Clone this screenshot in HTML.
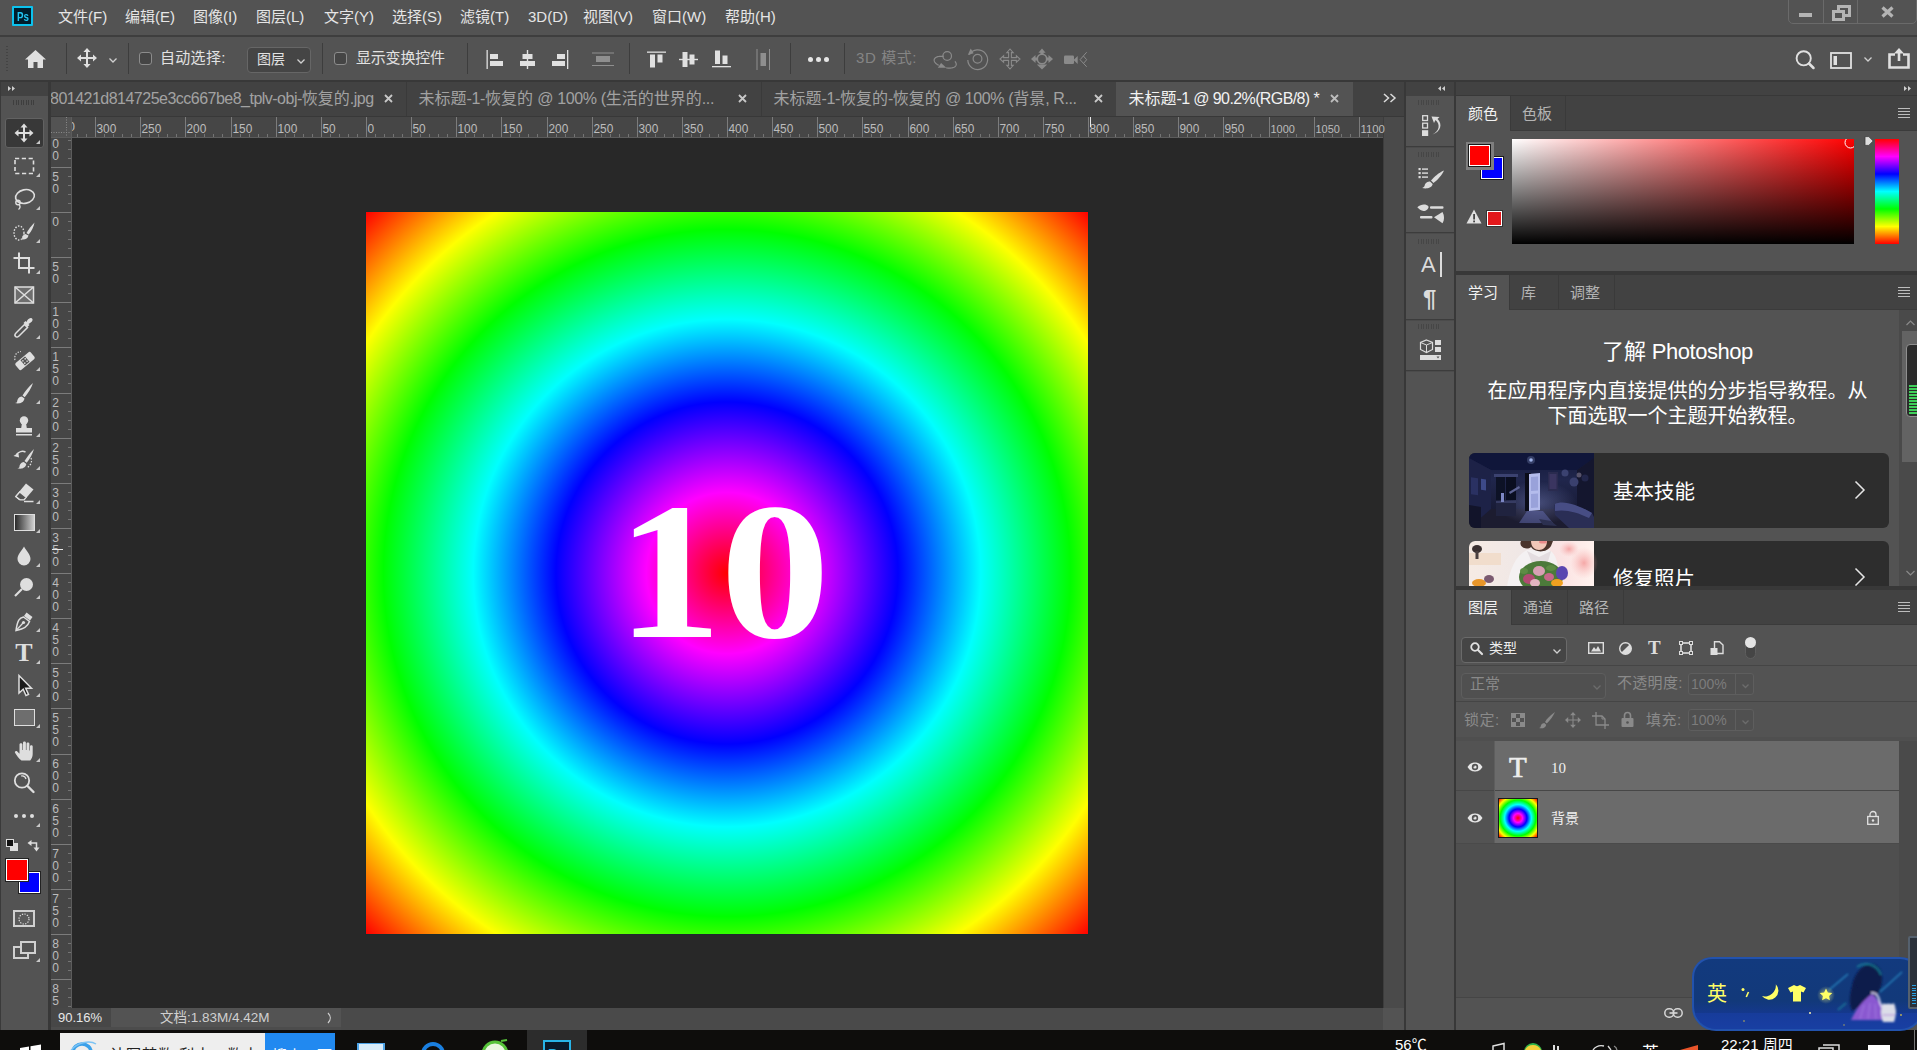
<!DOCTYPE html><html lang="zh-CN"><head><meta charset="utf-8"><title>Photoshop</title><style>
*{margin:0;padding:0;box-sizing:border-box}
html,body{width:1917px;height:1050px;overflow:hidden;background:#535353}
body{position:relative;font-family:"Liberation Sans","Noto Sans CJK SC",sans-serif;font-size:15px;color:#dcdcdc;line-height:1}
.a{position:absolute}
.t{position:absolute;white-space:nowrap;line-height:20px;height:20px}
svg{position:absolute;overflow:visible}
.sep{position:absolute;width:1px;background:#3d3d3d}
.cj{font-family:"Liberation Sans","Noto Sans CJK SC",sans-serif}
</style></head><body>
<div class="a" style="left:0px;top:0px;width:1917px;height:35px;background:#535353;"></div>
<div class="a" style="left:0px;top:35px;width:1917px;height:2px;background:#3e3e3e;"></div>
<div class="a" style="left:12px;top:6px;width:21px;height:20px;background:#001d2c;border:2px solid #0cc2ee;border-radius:1px"></div>
<div class="t" style="left:15px;top:6px;font-size:12.500px;font-weight:bold;color:#22c4f2;letter-spacing:0;left:16.500px;top:6.500px;transform-origin:0 0;transform:scaleX(0.780)">Ps</div>
<div class="t" style="left:58px;top:6.5px;font-size:15px;color:#e6e6e6;">文件(F)</div>
<div class="t" style="left:125px;top:6.5px;font-size:15px;color:#e6e6e6;">编辑(E)</div>
<div class="t" style="left:193px;top:6.5px;font-size:15px;color:#e6e6e6;">图像(I)</div>
<div class="t" style="left:256px;top:6.5px;font-size:15px;color:#e6e6e6;">图层(L)</div>
<div class="t" style="left:324px;top:6.5px;font-size:15px;color:#e6e6e6;">文字(Y)</div>
<div class="t" style="left:392px;top:6.5px;font-size:15px;color:#e6e6e6;">选择(S)</div>
<div class="t" style="left:460px;top:6.5px;font-size:15px;color:#e6e6e6;">滤镜(T)</div>
<div class="t" style="left:528px;top:6.5px;font-size:15px;color:#e6e6e6;">3D(D)</div>
<div class="t" style="left:583px;top:6.5px;font-size:15px;color:#e6e6e6;">视图(V)</div>
<div class="t" style="left:652px;top:6.5px;font-size:15px;color:#e6e6e6;">窗口(W)</div>
<div class="t" style="left:725px;top:6.5px;font-size:15px;color:#e6e6e6;">帮助(H)</div>
<div class="a" style="left:1788px;top:-2px;width:129px;height:26px;border:1px solid #6a6a6a;border-radius:0 0 5px 5px"></div>
<div class="a" style="left:1823px;top:0px;width:1px;height:23px;background:#6a6a6a;"></div>
<div class="a" style="left:1857px;top:0px;width:1px;height:23px;background:#6a6a6a;"></div>
<div class="a" style="left:1799px;top:13px;width:13px;height:4px;background:#b4b4b4;"></div>
<svg style="left:1832px;top:5px" width="19" height="16" viewBox="0 0 19 16"><path d="M6.5 1.5h11v9h-11z" fill="none" stroke="#b4b4b4" stroke-width="3"/><path d="M1.5 6.5h10v8h-10z" fill="#535353" stroke="#b4b4b4" stroke-width="3"/></svg>
<svg style="left:1881px;top:7px" width="13" height="10" viewBox="0 0 13 10"><path d="M1.5 0.5L11.5 9.5M11.5 0.5L1.5 9.5" stroke="#b4b4b4" stroke-width="3.2"/></svg>
<div class="a" style="left:0px;top:37px;width:1917px;height:43px;background:#535353;"></div>
<div class="a" style="left:0px;top:80px;width:1917px;height:2px;background:#383838;"></div>
<div class="a" style="left:6px;top:46px;width:2px;height:1px;background:#444;"></div>
<div class="a" style="left:6px;top:49px;width:2px;height:1px;background:#444;"></div>
<div class="a" style="left:6px;top:52px;width:2px;height:1px;background:#444;"></div>
<div class="a" style="left:6px;top:55px;width:2px;height:1px;background:#444;"></div>
<div class="a" style="left:6px;top:58px;width:2px;height:1px;background:#444;"></div>
<div class="a" style="left:6px;top:61px;width:2px;height:1px;background:#444;"></div>
<div class="a" style="left:6px;top:64px;width:2px;height:1px;background:#444;"></div>
<div class="a" style="left:6px;top:67px;width:2px;height:1px;background:#444;"></div>
<div class="a" style="left:6px;top:70px;width:2px;height:1px;background:#444;"></div>
<svg style="left:24px;top:49px" width="23" height="20" viewBox="0 0 23 20"><path d="M11.5 1L1 10.5h3V19h5.5v-6h4v6H19v-8.5h3z" fill="#e0e0e0"/></svg>
<div class="sep" style="left:66px;top:43px;height:31px"></div>
<div class="sep" style="left:128px;top:43px;height:31px"></div>
<div class="sep" style="left:322px;top:43px;height:31px"></div>
<div class="sep" style="left:467px;top:43px;height:31px"></div>
<div class="sep" style="left:629px;top:43px;height:31px"></div>
<div class="sep" style="left:790px;top:43px;height:31px"></div>
<div class="sep" style="left:844px;top:43px;height:31px"></div>
<svg style="left:77.0px;top:48.0px" width="20" height="20" viewBox="-10 -10 20 20"><path d="M0 -7V7M-7 0H7" stroke="#e0e0e0" stroke-width="2" fill="none"/><path d="M0 -10l3.6 4h-7.2zM0 10l3.6 -4h-7.2zM-10 0l4 -3.6v7.2zM10 0l-4 -3.6v7.2z" fill="#e0e0e0"/></svg>
<svg style="left:109.0px;top:58.0px" width="8" height="5.0" viewBox="0 0 8 5.0"><path d="M0.5 0.5L4.0 4.0L7.5 0.5" fill="none" stroke="#d0d0d0" stroke-width="1.3"/></svg>
<div class="a" style="left:139px;top:52px;width:13px;height:13px;border:1.5px solid #8c8c8c;border-radius:3px;background:#454545"></div>
<div class="t" style="left:160px;top:48px;font-size:15px;color:#e2e2e2;letter-spacing:0.3px">自动选择:</div>
<div class="a" style="left:247px;top:47px;width:64px;height:26px;border:1px solid #666;border-radius:4px;background:#454545"></div>
<div class="t" style="left:257px;top:49px;font-size:14px;color:#e2e2e2;">图层</div>
<svg style="left:297.0px;top:59.0px" width="8" height="5.0" viewBox="0 0 8 5.0"><path d="M0.5 0.5L4.0 4.0L7.5 0.5" fill="none" stroke="#d0d0d0" stroke-width="1.3"/></svg>
<div class="a" style="left:334px;top:52px;width:13px;height:13px;border:1.5px solid #8c8c8c;border-radius:3px;background:#454545"></div>
<div class="t" style="left:356px;top:48px;font-size:15px;color:#e2e2e2;letter-spacing:-0.200px">显示变换控件</div>
<svg style="left:486px;top:50px" width="18" height="19" viewBox="0 0 18 19"><rect x="0.5" y="0" width="1.3" height="19" fill="#e0e0e0"/><rect x="4" y="4" width="8" height="5" fill="#e0e0e0"/><rect x="4" y="11" width="13" height="5" fill="#e0e0e0"/></svg>
<svg style="left:520px;top:50px" width="15" height="19" viewBox="0 0 15 19"><rect x="6.8" y="0" width="1.4" height="19" fill="#e0e0e0"/><rect x="2.5" y="4" width="10" height="5" fill="#e0e0e0"/><rect x="0" y="11" width="15" height="5" fill="#e0e0e0"/></svg>
<svg style="left:551px;top:50px" width="18" height="19" viewBox="0 0 18 19"><rect x="16" y="0" width="1.3" height="19" fill="#e0e0e0"/><rect x="6" y="4" width="8" height="5" fill="#e0e0e0"/><rect x="1" y="11" width="13" height="5" fill="#e0e0e0"/></svg>
<svg style="left:592px;top:52px" width="22" height="15" viewBox="0 0 22 15"><rect x="0" y="0.5" width="22" height="1" fill="#8f8f8f"/><rect x="0" y="13" width="22" height="1" fill="#8f8f8f"/><rect x="4" y="4" width="14" height="6" fill="#8f8f8f"/></svg>
<svg style="left:647px;top:51px" width="20" height="17" viewBox="0 0 20 17"><rect x="0" y="0.5" width="19" height="1.3" fill="#e0e0e0"/><rect x="3" y="3.5" width="5" height="13" fill="#e0e0e0"/><rect x="10.5" y="3.5" width="5" height="8" fill="#e0e0e0"/></svg>
<svg style="left:679px;top:52px" width="19" height="15" viewBox="0 0 19 15"><rect x="0" y="6.8" width="19" height="1.4" fill="#e0e0e0"/><rect x="3.5" y="0" width="5" height="15" fill="#e0e0e0"/><rect x="10.5" y="2.5" width="5" height="10" fill="#e0e0e0"/></svg>
<svg style="left:712px;top:50px" width="19" height="18" viewBox="0 0 19 18"><rect x="0" y="16" width="19" height="1.3" fill="#e0e0e0"/><rect x="3" y="0.5" width="5" height="13.5" fill="#e0e0e0"/><rect x="10.5" y="5.5" width="5" height="8.5" fill="#e0e0e0"/></svg>
<svg style="left:756px;top:49px" width="15" height="21" viewBox="0 0 15 21"><rect x="0.5" y="0" width="1" height="21" fill="#8f8f8f"/><rect x="13" y="0" width="1" height="21" fill="#8f8f8f"/><rect x="4.5" y="4" width="5.5" height="13" fill="#8f8f8f"/></svg>
<div class="a" style="left:808px;top:57px;width:5px;height:5px;border-radius:50%;background:#e6e6e6"></div>
<div class="a" style="left:816px;top:57px;width:5px;height:5px;border-radius:50%;background:#e6e6e6"></div>
<div class="a" style="left:824px;top:57px;width:5px;height:5px;border-radius:50%;background:#e6e6e6"></div>
<div class="t" style="left:856px;top:48px;font-size:15px;color:#858585;letter-spacing:0.6px">3D 模式:</div>
<svg style="left:932px;top:48px" width="28" height="22" viewBox="0 0 28 22"><circle cx="15.200" cy="8" r="4.300" fill="none" stroke="#8a8a8a" stroke-width="1.200"/><path d="M11.62 8.43 L10.56 8.33 L9.52 8.29 L8.52 8.31 L7.56 8.38 L6.66 8.51 L5.82 8.69 L5.05 8.93 L4.36 9.21 L3.75 9.55 L3.24 9.93 L2.82 10.35 L2.50 10.81 L2.28 11.30 L2.17 11.81 L2.17 12.36 L2.27 12.92 L2.48 13.49 L2.79 14.07 L3.20 14.65 L3.71 15.22 L4.30 15.79 L4.99 16.34 L5.75 16.87 L6.59 17.37" fill="none" stroke="#8a8a8a" stroke-width="1.200"/><path d="M14.20 19.89 L15.10 20.00 L15.99 20.08 L16.86 20.11 L17.70 20.10 L18.51 20.05 L19.29 19.97 L20.02 19.84 L20.71 19.68 L21.35 19.47 L21.94 19.24 L22.46 18.97 L22.92 18.66 L23.32 18.33 L23.65 17.97 L23.91 17.58 L24.09 17.17 L24.20 16.75 L24.24 16.30 L24.21 15.84 L24.09 15.37 L23.91 14.89 L23.65 14.40 L23.33 13.92 L22.93 13.43" fill="none" stroke="#8a8a8a" stroke-width="1.200"/><path d="M5.800 19.800H14.300L9.100 15z" fill="#8a8a8a"/></svg>
<svg style="left:966px;top:47px" width="24" height="24" viewBox="0 0 24 24"><circle cx="11.500" cy="11.800" r="4.400" fill="none" stroke="#8a8a8a" stroke-width="1.200"/><path d="M3.200 7.600A9.900 9.900 0 1 1 1.800 13" fill="none" stroke="#8a8a8a" stroke-width="1.200"/><path d="M1.800 8L7.600 6.200L4.700 1.600z" fill="#8a8a8a"/></svg>
<svg style="left:999.300px;top:48.400px" width="22" height="22" viewBox="-11 -11 22 22"><path d="M0 -10L-3.200 -6.400H-1.400V-1.400H-6.400V-3.200L-10 0L-6.400 3.200V1.400H-1.400V6.400H-3.200L0 10L3.200 6.400H1.400V1.400H6.400V3.200L10 0L6.400 -3.200V-1.400H1.400V-6.400H3.200z" fill="none" stroke="#8a8a8a" stroke-width="1.100" stroke-linejoin="miter"/></svg>
<svg style="left:1030px;top:46.800px" width="24" height="24" viewBox="-12 -12 24 24"><circle r="4.700" fill="none" stroke="#8a8a8a" stroke-width="1.600"/><path d="M0 -10.500l3.600 4.200h-2v1.500h-3.200v-1.500h-2zM0 10.500l5.200 -5h-10.400zM-11 0l4.500 -4v2.400h1.500v3.200h-1.500v2.400zM11 0l-4.500 -4v2.400h-1.500v3.200h1.500v2.400z" fill="#8a8a8a"/></svg>
<svg style="left:1064px;top:51px" width="24" height="18" viewBox="0 0 24 18"><rect x="0" y="4.500" width="10" height="8.500" rx="1.200" fill="#8a8a8a"/><path d="M9.500 9l4.200-4v8z" fill="#8a8a8a"/><path d="M22.700 1.200L16.100 8.700L22.700 15.800" fill="none" stroke="#8a8a8a" stroke-width="1"/><path d="M19.400 5L22.700 8.700L19.400 12.500" fill="none" stroke="#8a8a8a" stroke-width="1"/></svg>
<svg style="left:1794px;top:48px" width="22" height="22" viewBox="0 0 22 22"><circle cx="9.700" cy="10.300" r="7.100" fill="none" stroke="#e0e0e0" stroke-width="1.900"/><path d="M15 15.500l4.500 4.500" stroke="#e0e0e0" stroke-width="2.500" stroke-linecap="round"/></svg>
<svg style="left:1830px;top:52px" width="22" height="17" viewBox="0 0 22 17"><rect x="1" y="1" width="20" height="15" fill="none" stroke="#e0e0e0" stroke-width="1.8"/><rect x="3.5" y="4" width="3.5" height="9" fill="#e0e0e0"/></svg>
<svg style="left:1864.0px;top:57.0px" width="8" height="5.0" viewBox="0 0 8 5.0"><path d="M0.5 0.5L4.0 4.0L7.5 0.5" fill="none" stroke="#d0d0d0" stroke-width="1.3"/></svg>
<svg style="left:1888px;top:48px" width="22" height="21" viewBox="0 0 22 21"><path d="M7 6.5H1.5V19.5H20.5V6.5H15" fill="none" stroke="#e0e0e0" stroke-width="2.6"/><path d="M11 13V3" stroke="#e0e0e0" stroke-width="2.6"/><path d="M11 0l5 5.5h-10z" fill="#e0e0e0"/></svg>
<div class="a" style="left:0px;top:82px;width:48px;height:948px;background:#535353;"></div>
<div class="a" style="left:0px;top:82px;width:48px;height:14px;background:#424242;"></div>
<div class="a" style="left:0px;top:82px;width:1px;height:948px;background:#3a3a3a;"></div>
<div class="a" style="left:48px;top:82px;width:3px;height:948px;background:#383838;"></div>
<svg style="left:8px;top:85.5px" width="8" height="5" viewBox="0 0 8 5"><path d="M0 0l3 2.500l-3 2.500zM4 0l3 2.500l-3 2.500z" fill="#cfcfcf"/></svg>
<div class="a" style="left:13.0px;top:100px;width:1px;height:5px;background:#3e3e3e;"></div>
<div class="a" style="left:15.5px;top:100px;width:1px;height:5px;background:#3e3e3e;"></div>
<div class="a" style="left:18.0px;top:100px;width:1px;height:5px;background:#3e3e3e;"></div>
<div class="a" style="left:20.5px;top:100px;width:1px;height:5px;background:#3e3e3e;"></div>
<div class="a" style="left:23.0px;top:100px;width:1px;height:5px;background:#3e3e3e;"></div>
<div class="a" style="left:25.5px;top:100px;width:1px;height:5px;background:#3e3e3e;"></div>
<div class="a" style="left:28.0px;top:100px;width:1px;height:5px;background:#3e3e3e;"></div>
<div class="a" style="left:30.5px;top:100px;width:1px;height:5px;background:#3e3e3e;"></div>
<div class="a" style="left:33.0px;top:100px;width:1px;height:5px;background:#3e3e3e;"></div>
<div class="a" style="left:4.500px;top:117.500px;width:39px;height:30px;background:#383838;border:1px solid #626262;border-radius:3px"></div>
<svg style="left:12px;top:121px" width="24" height="24" viewBox="0 0 24 24"><path d="M12 5V19M5 12H19" stroke="#dedede" stroke-width="2" fill="none"/><path d="M12 2.5l3.5 4h-7zM12 21.5l3.5 -4h-7zM2.5 12l4 -3.5v7zM21.5 12l-4 -3.5v7z" fill="#dedede"/></svg>
<svg style="left:36px;top:140px" width="4" height="4" viewBox="0 0 4 4"><path d="M4 0V4H0z" fill="#c8c8c8"/></svg>
<svg style="left:12px;top:153.5px" width="24" height="24" viewBox="0 0 24 24"><rect x="3" y="4.5" width="18.5" height="15" fill="none" stroke="#dedede" stroke-width="1.6" stroke-dasharray="4.2 2.6"/></svg>
<svg style="left:36px;top:172.5px" width="4" height="4" viewBox="0 0 4 4"><path d="M4 0V4H0z" fill="#c8c8c8"/></svg>
<svg style="left:12px;top:187px" width="24" height="24" viewBox="0 0 24 24"><ellipse cx="13" cy="9.5" rx="9.5" ry="6.8" fill="none" stroke="#dedede" stroke-width="1.6" transform="rotate(-12 13 9.5)"/><circle cx="6" cy="15.5" r="2.2" fill="none" stroke="#dedede" stroke-width="1.4"/><path d="M7 17.5c1.5 1.5 1.5 3.5 -0.5 5" fill="none" stroke="#dedede" stroke-width="1.4"/></svg>
<svg style="left:36px;top:206px" width="4" height="4" viewBox="0 0 4 4"><path d="M4 0V4H0z" fill="#c8c8c8"/></svg>
<svg style="left:12px;top:220px" width="24" height="24" viewBox="0 0 24 24"><ellipse cx="7" cy="13" rx="5" ry="7" fill="none" stroke="#dedede" stroke-width="1.4" stroke-dasharray="1.5 1.5"/><path d="M22.5 2.5c-3 3-6 7-8 10.5l2.2 1.6c3-3.5 5-8 5.8-12.100z" fill="#dedede"/><path d="M13.500 14c-2.500 0.500-3.500 2.500-3.500 5.500c3 0.500 6-1 6.500-4z" fill="#dedede"/></svg>
<svg style="left:36px;top:239px" width="4" height="4" viewBox="0 0 4 4"><path d="M4 0V4H0z" fill="#c8c8c8"/></svg>
<svg style="left:12px;top:251px" width="24" height="24" viewBox="0 0 24 24"><path d="M7 1.500V17H22.500M1.500 7H17V22.500" fill="none" stroke="#dedede" stroke-width="2"/></svg>
<svg style="left:36px;top:270px" width="4" height="4" viewBox="0 0 4 4"><path d="M4 0V4H0z" fill="#c8c8c8"/></svg>
<svg style="left:12px;top:283px" width="24" height="24" viewBox="0 0 24 24"><rect x="3" y="4" width="18.500" height="16" fill="#6e6e6e" stroke="#dedede" stroke-width="1.5"/><path d="M3 4L21.500 20M21.500 4L3 20" stroke="#dedede" stroke-width="1.5"/></svg>
<svg style="left:12px;top:316px" width="24" height="24" viewBox="0 0 24 24"><path d="M3.500 20.500c-1-1-0.500-2.500 0.500-3.500l8.500-8.500l3 3l-8.500 8.500c-1 1-2.500 1.500-3.500 0.500z" fill="none" stroke="#dedede" stroke-width="1.500"/><path d="M11.500 7l2-2l1 1c1-2 3-5 5.500-3.500c2 2-1.500 4.500-3.500 5.500l1 1l-2 2z" fill="#dedede"/></svg>
<svg style="left:36px;top:335px" width="4" height="4" viewBox="0 0 4 4"><path d="M4 0V4H0z" fill="#c8c8c8"/></svg>
<svg style="left:12px;top:348px" width="24" height="24" viewBox="0 0 24 24"><g transform="rotate(-40 13 13)"><rect x="3" y="8.500" width="20" height="9" rx="2" fill="#dedede"/><rect x="10" y="9.500" width="6" height="7" fill="#535353"/><g fill="#dedede"><circle cx="11.500" cy="11.500" r="0.800"/><circle cx="14.500" cy="11.500" r="0.800"/><circle cx="11.500" cy="14.500" r="0.800"/><circle cx="14.500" cy="14.500" r="0.800"/></g></g><path d="M3 12c-1-4 1-8 6-8.500" fill="none" stroke="#dedede" stroke-width="1.200" stroke-dasharray="1.400 1.400"/></svg>
<svg style="left:36px;top:367px" width="4" height="4" viewBox="0 0 4 4"><path d="M4 0V4H0z" fill="#c8c8c8"/></svg>
<svg style="left:12px;top:381px" width="24" height="24" viewBox="0 0 24 24"><path d="M21 2c-4 3.500-8 8.500-10.500 12.500l2.200 1.800c3.300-4 6.800-9.500 8.300-14.300z" fill="#dedede"/><path d="M9.800 15.500c-3 0.300-4.500 2.500-4.800 5.800c-0.500 0.500-1.500 0.700-2 0.700c3.500 1 8.500 0.500 9.500-4.500z" fill="#dedede"/></svg>
<svg style="left:36px;top:400px" width="4" height="4" viewBox="0 0 4 4"><path d="M4 0V4H0z" fill="#c8c8c8"/></svg>
<svg style="left:12px;top:414px" width="24" height="24" viewBox="0 0 24 24"><circle cx="12" cy="6.500" r="4.200" fill="#dedede"/><path d="M10 9h4l0.800 5H20v4.500H4V14h5.200z" fill="#dedede"/><rect x="4" y="20" width="16" height="1.500" fill="#dedede"/></svg>
<svg style="left:36px;top:433px" width="4" height="4" viewBox="0 0 4 4"><path d="M4 0V4H0z" fill="#c8c8c8"/></svg>
<svg style="left:12px;top:446.7px" width="24" height="24" viewBox="0 0 24 24"><path d="M22 2c-3.500 3.500-7 8-9.500 12l2.200 1.800c3-4 6-9 7.300-13.800z" fill="#dedede"/><path d="M11.800 15c-2.800 0.300-4.300 2.300-4.500 5.500c-0.500 0.500-1.300 0.700-2 0.700c3.500 1 8 0.500 9-4.200z" fill="#dedede"/><path d="M4.500 7.500c2-3 6-4 9-2.500" fill="none" stroke="#dedede" stroke-width="1.400"/><path d="M1.500 9l4.800-3.200l0.800 4.800z" fill="#dedede"/><path d="M19 11c1.500 4-0.500 8-4 9.500" fill="none" stroke="#dedede" stroke-width="1.200" stroke-dasharray="1.500 1.500"/></svg>
<svg style="left:36px;top:465.7px" width="4" height="4" viewBox="0 0 4 4"><path d="M4 0V4H0z" fill="#c8c8c8"/></svg>
<svg style="left:12px;top:481px" width="24" height="24" viewBox="0 0 24 24"><path d="M14 2.500l7.500 6l-9 10.500H7l-4-3.200z" fill="#dedede"/><path d="M4.500 15l6 4.800" stroke="#535353" stroke-width="0"/><path d="M3.800 15.500l4.200 3.300h4l2.200-2.600l-6.500-5.200z" fill="#535353" stroke="#dedede" stroke-width="1.300"/><path d="M12 20.500h9.500" stroke="#dedede" stroke-width="1.500"/></svg>
<svg style="left:36px;top:500px" width="4" height="4" viewBox="0 0 4 4"><path d="M4 0V4H0z" fill="#c8c8c8"/></svg>
<div class="a" style="left:14px;top:514px;width:20.500px;height:16.500px;border:1.500px solid #dedede;background:linear-gradient(90deg,#2a2a2a,#d0d0d0)"></div>
<svg style="left:36px;top:529px" width="4" height="4" viewBox="0 0 4 4"><path d="M4 0V4H0z" fill="#c8c8c8"/></svg>
<svg style="left:12px;top:543.7px" width="24" height="24" viewBox="0 0 24 24"><path d="M12 2.500c2.500 4.500 6.500 8 6.500 12.500a6.500 6.500 0 0 1-13 0c0-4.500 4-8 6.500-12.500z" fill="#dedede"/></svg>
<svg style="left:36px;top:562.7px" width="4" height="4" viewBox="0 0 4 4"><path d="M4 0V4H0z" fill="#c8c8c8"/></svg>
<svg style="left:12px;top:575.8px" width="24" height="24" viewBox="0 0 24 24"><circle cx="14.500" cy="8.500" r="6.500" fill="#dedede"/><path d="M10 13L3 20" stroke="#dedede" stroke-width="2.200"/></svg>
<svg style="left:36px;top:594.8px" width="4" height="4" viewBox="0 0 4 4"><path d="M4 0V4H0z" fill="#c8c8c8"/></svg>
<svg style="left:12px;top:609px" width="24" height="24" viewBox="0 0 24 24"><path d="M14.500 3.500l6 4.500l-2.500 3.500l-6-4.500z" fill="#dedede"/><path d="M11.500 8c-4 1-6 3-7.500 13.500c8-2 11.500-3.500 13.500-9z" fill="none" stroke="#dedede" stroke-width="1.500"/><path d="M4.500 21l6.500-7" stroke="#dedede" stroke-width="1.200"/><circle cx="11.500" cy="13.500" r="1.600" fill="#dedede"/></svg>
<svg style="left:36px;top:628px" width="4" height="4" viewBox="0 0 4 4"><path d="M4 0V4H0z" fill="#c8c8c8"/></svg>
<div class="t" style="left:13px;top:640px;width:22px;text-align:center;font-family:'Liberation Serif',serif;font-weight:bold;font-size:26px;line-height:26px;height:26px;color:#dedede">T</div>
<svg style="left:36px;top:660px" width="4" height="4" viewBox="0 0 4 4"><path d="M4 0V4H0z" fill="#c8c8c8"/></svg>
<svg style="left:12px;top:674px" width="24" height="24" viewBox="0 0 24 24"><path d="M7 1.500V19l4.200-3.800l2.800 6.300l2.500-1.100l-2.800-6.200h5.800z" fill="#1a1a1a" stroke="#dedede" stroke-width="1.500" stroke-linejoin="miter"/></svg>
<svg style="left:36px;top:693px" width="4" height="4" viewBox="0 0 4 4"><path d="M4 0V4H0z" fill="#c8c8c8"/></svg>
<div class="a" style="left:14px;top:709px;width:20.500px;height:16.500px;border:1.500px solid #dedede;background:#6e6e6e"></div>
<svg style="left:36px;top:724px" width="4" height="4" viewBox="0 0 4 4"><path d="M4 0V4H0z" fill="#c8c8c8"/></svg>
<svg style="left:12px;top:738.5px" width="24" height="24" viewBox="0 0 24 24"><path d="M9.500 21.500c-2.500-2-5-5-6.500-7.800c-0.700-1.400 1.200-2.500 2.300-1.300l2.200 2.400V5.500c0-1.800 2.900-1.800 2.900 0V11h0.600V3.800c0-1.800 2.900-1.800 2.900 0V11h0.600V4.800c0-1.800 2.900-1.800 2.900 0V11.500h0.600V7.500c0-1.700 2.700-1.700 2.700 0V15c0 3-1.200 5-2.500 6.500z" fill="#dedede"/></svg>
<svg style="left:36px;top:757.5px" width="4" height="4" viewBox="0 0 4 4"><path d="M4 0V4H0z" fill="#c8c8c8"/></svg>
<svg style="left:12px;top:771px" width="24" height="24" viewBox="0 0 24 24"><circle cx="10" cy="9.500" r="7.200" fill="none" stroke="#dedede" stroke-width="1.800"/><path d="M15.500 15l6 6" stroke="#dedede" stroke-width="2.400" stroke-linecap="round"/><path d="M9 5c2.500-0.500 4.500 1 5 3" fill="none" stroke="#dedede" stroke-width="1.200"/></svg>
<div class="a" style="left:14px;top:814px;width:4px;height:4px;border-radius:50%;background:#dedede"></div>
<div class="a" style="left:22px;top:814px;width:4px;height:4px;border-radius:50%;background:#dedede"></div>
<div class="a" style="left:30px;top:814px;width:4px;height:4px;border-radius:50%;background:#dedede"></div>
<svg style="left:36px;top:823px" width="4" height="4" viewBox="0 0 4 4"><path d="M4 0V4H0z" fill="#c8c8c8"/></svg>
<div class="a" style="left:10px;top:843px;width:8px;height:8px;background:#dcdcdc;"></div>
<div class="a" style="left:6px;top:839px;width:8px;height:8px;background:#111;border:1px solid #dcdcdc"></div>
<svg style="left:27px;top:839px" width="13" height="13" viewBox="0 0 13 13"><path d="M3.500 4H9.500V10" fill="none" stroke="#dedede" stroke-width="1.500"/><path d="M0.500 4l4-3v6zM9.500 12.500l-3-4h6z" fill="#dedede"/></svg>
<div class="a" style="left:18.700px;top:871.600px;width:21.300px;height:21.400px;background:#0000ff;border:1px solid #fff;outline:1px solid #222"></div>
<div class="a" style="left:6.300px;top:859px;width:21.300px;height:21.500px;background:#ff0000;border:1px solid #fff;outline:1px solid #222"></div>
<div class="a" style="left:13px;top:909.500px;width:22px;height:17px;border:2px solid #d0d0d0;background:#5a5a5a"></div>
<svg style="left:18px;top:912.5px" width="12" height="12" viewBox="0 0 12 12"><circle cx="6" cy="6" r="5" fill="none" stroke="#dedede" stroke-width="1.200" stroke-dasharray="1.300 1.300"/></svg>
<div class="a" style="left:13px;top:946px;width:16px;height:13px;border:2px solid #d0d0d0;background:#535353"></div>
<div class="a" style="left:20px;top:941px;width:16px;height:13px;border:2px solid #d0d0d0;background:#535353"></div>
<svg style="left:36px;top:958px" width="4" height="4" viewBox="0 0 4 4"><path d="M4 0V4H0z" fill="#c8c8c8"/></svg>
<div class="a" style="left:51px;top:82px;width:1353px;height:34px;background:#424242;"></div>
<div class="a" style="left:51px;top:116px;width:1353px;height:1px;background:#383838;"></div>
<div class="t" style="left:50px;top:88.5px;font-size:16px;color:#a2a2a2;"><span style="letter-spacing:-0.513px">801421d814725e3cc667be8_tplv-obj-</span>恢复的<span style="letter-spacing:-0.513px">.jpg</span></div>
<div class="a" style="left:48px;top:82px;width:3px;height:34px;background:#383838;"></div>
<svg style="left:384px;top:94px" width="9" height="9" viewBox="0 0 9 9"><path d="M1 1L8 8M8 1L1 8" stroke="#c8c8c8" stroke-width="1.8"/></svg>
<div class="a" style="left:406px;top:82px;width:1px;height:34px;background:#3a3a3a;"></div>
<div class="a" style="left:761px;top:82px;width:1px;height:34px;background:#3a3a3a;"></div>
<div class="t" style="left:418.5px;top:88.5px;font-size:16px;color:#a2a2a2;">未标题<span style="letter-spacing:-0.349px">-1-</span>恢复的<span style="letter-spacing:-0.349px"> @ 100% (</span>生活的世界的<span style="letter-spacing:-0.349px">...</span></div>
<svg style="left:738px;top:94px" width="9" height="9" viewBox="0 0 9 9"><path d="M1 1L8 8M8 1L1 8" stroke="#c8c8c8" stroke-width="1.8"/></svg>
<div class="t" style="left:773.5px;top:88.5px;font-size:16px;color:#a2a2a2;">未标题<span style="letter-spacing:-0.395px">-1-</span>恢复的<span style="letter-spacing:-0.395px">-</span>恢复的<span style="letter-spacing:-0.395px"> @ 100% (</span>背景<span style="letter-spacing:-0.395px">, R...</span></div>
<svg style="left:1094px;top:94px" width="9" height="9" viewBox="0 0 9 9"><path d="M1 1L8 8M8 1L1 8" stroke="#c8c8c8" stroke-width="1.8"/></svg>
<div class="a" style="left:1116px;top:82px;width:237px;height:34px;background:#535353;"></div>
<div class="t" style="left:1128.5px;top:88.5px;font-size:16px;color:#f2f2f2;">未标题<span style="letter-spacing:-0.609px">-1 @ 90.2%(RGB/8) *</span></div>
<svg style="left:1330px;top:94px" width="9" height="9" viewBox="0 0 9 9"><path d="M1 1L8 8M8 1L1 8" stroke="#bdbdbd" stroke-width="1.8"/></svg>
<svg style="left:1383px;top:93px" width="13" height="10" viewBox="0 0 13 10"><path d="M1 1l4.500 4l-4.500 4M7.500 1l4.500 4l-4.500 4" fill="none" stroke="#dcdcdc" stroke-width="1.500"/></svg>
<div class="a" style="left:51px;top:117px;width:1353px;height:891px;background:#282828;"></div>
<div class="a" style="left:51px;top:117px;width:1332px;height:21px;background:#464646;"></div>
<div class="a" style="left:51px;top:117px;width:21px;height:891px;background:#464646;"></div>
<div class="a" style="left:51px;top:137px;width:1332px;height:1px;background:#5c5c5c;"></div>
<div class="a" style="left:71px;top:117px;width:1px;height:891px;background:#5c5c5c;"></div>
<div class="a" style="left:51px;top:117px;width:20px;height:20px;background:#535353;"></div>
<svg style="left:51px;top:117px" width="20" height="20" viewBox="0 0 20 20"><path d="M15.500 0V20M0 15.500H20" stroke="#8a8a8a" stroke-width="1" stroke-dasharray="1 1.500"/></svg>
<div class="a" style="left:1383px;top:117px;width:21px;height:891px;background:#4a4a4a;"></div>
<div class="a" style="left:1383px;top:117px;width:1px;height:891px;background:#3d3d3d;"></div>
<svg style="left:72px;top:117px" width="1311" height="21" viewBox="72 117 1311 21"><rect x="77" y="134" width="1" height="3" fill="#747474"/><rect x="86" y="134" width="1" height="3" fill="#747474"/><rect x="95" y="117" width="1" height="20" fill="#7c7c7c"/><text x="96.5" y="133" font-size="12.5" fill="#bcbcbc" font-family="Liberation Sans, sans-serif" textLength="19.799999999999997" lengthAdjust="spacingAndGlyphs">300</text><rect x="104" y="134" width="1" height="3" fill="#747474"/><rect x="113" y="134" width="1" height="3" fill="#747474"/><rect x="122" y="134" width="1" height="3" fill="#747474"/><rect x="131" y="134" width="1" height="3" fill="#747474"/><rect x="140" y="117" width="1" height="20" fill="#7c7c7c"/><text x="141.5" y="133" font-size="12.5" fill="#bcbcbc" font-family="Liberation Sans, sans-serif" textLength="19.799999999999997" lengthAdjust="spacingAndGlyphs">250</text><rect x="149" y="134" width="1" height="3" fill="#747474"/><rect x="158" y="134" width="1" height="3" fill="#747474"/><rect x="167" y="134" width="1" height="3" fill="#747474"/><rect x="176" y="134" width="1" height="3" fill="#747474"/><rect x="185" y="117" width="1" height="20" fill="#7c7c7c"/><text x="186.5" y="133" font-size="12.5" fill="#bcbcbc" font-family="Liberation Sans, sans-serif" textLength="19.799999999999997" lengthAdjust="spacingAndGlyphs">200</text><rect x="195" y="134" width="1" height="3" fill="#747474"/><rect x="204" y="134" width="1" height="3" fill="#747474"/><rect x="213" y="134" width="1" height="3" fill="#747474"/><rect x="222" y="134" width="1" height="3" fill="#747474"/><rect x="231" y="117" width="1" height="20" fill="#7c7c7c"/><text x="232.5" y="133" font-size="12.5" fill="#bcbcbc" font-family="Liberation Sans, sans-serif" textLength="19.799999999999997" lengthAdjust="spacingAndGlyphs">150</text><rect x="240" y="134" width="1" height="3" fill="#747474"/><rect x="249" y="134" width="1" height="3" fill="#747474"/><rect x="258" y="134" width="1" height="3" fill="#747474"/><rect x="267" y="134" width="1" height="3" fill="#747474"/><rect x="276" y="117" width="1" height="20" fill="#7c7c7c"/><text x="277.5" y="133" font-size="12.5" fill="#bcbcbc" font-family="Liberation Sans, sans-serif" textLength="19.799999999999997" lengthAdjust="spacingAndGlyphs">100</text><rect x="285" y="134" width="1" height="3" fill="#747474"/><rect x="294" y="134" width="1" height="3" fill="#747474"/><rect x="303" y="134" width="1" height="3" fill="#747474"/><rect x="312" y="134" width="1" height="3" fill="#747474"/><rect x="321" y="117" width="1" height="20" fill="#7c7c7c"/><text x="322.5" y="133" font-size="12.5" fill="#bcbcbc" font-family="Liberation Sans, sans-serif" textLength="13.2" lengthAdjust="spacingAndGlyphs">50</text><rect x="330" y="134" width="1" height="3" fill="#747474"/><rect x="339" y="134" width="1" height="3" fill="#747474"/><rect x="348" y="134" width="1" height="3" fill="#747474"/><rect x="357" y="134" width="1" height="3" fill="#747474"/><rect x="366" y="117" width="1" height="20" fill="#7c7c7c"/><text x="367.5" y="133" font-size="12.5" fill="#bcbcbc" font-family="Liberation Sans, sans-serif" textLength="6.6" lengthAdjust="spacingAndGlyphs">0</text><rect x="375" y="134" width="1" height="3" fill="#747474"/><rect x="384" y="134" width="1" height="3" fill="#747474"/><rect x="393" y="134" width="1" height="3" fill="#747474"/><rect x="402" y="134" width="1" height="3" fill="#747474"/><rect x="411" y="117" width="1" height="20" fill="#7c7c7c"/><text x="412.5" y="133" font-size="12.5" fill="#bcbcbc" font-family="Liberation Sans, sans-serif" textLength="13.2" lengthAdjust="spacingAndGlyphs">50</text><rect x="420" y="134" width="1" height="3" fill="#747474"/><rect x="429" y="134" width="1" height="3" fill="#747474"/><rect x="438" y="134" width="1" height="3" fill="#747474"/><rect x="447" y="134" width="1" height="3" fill="#747474"/><rect x="456" y="117" width="1" height="20" fill="#7c7c7c"/><text x="457.5" y="133" font-size="12.5" fill="#bcbcbc" font-family="Liberation Sans, sans-serif" textLength="19.799999999999997" lengthAdjust="spacingAndGlyphs">100</text><rect x="465" y="134" width="1" height="3" fill="#747474"/><rect x="474" y="134" width="1" height="3" fill="#747474"/><rect x="483" y="134" width="1" height="3" fill="#747474"/><rect x="492" y="134" width="1" height="3" fill="#747474"/><rect x="501" y="117" width="1" height="20" fill="#7c7c7c"/><text x="502.5" y="133" font-size="12.5" fill="#bcbcbc" font-family="Liberation Sans, sans-serif" textLength="19.799999999999997" lengthAdjust="spacingAndGlyphs">150</text><rect x="510" y="134" width="1" height="3" fill="#747474"/><rect x="519" y="134" width="1" height="3" fill="#747474"/><rect x="528" y="134" width="1" height="3" fill="#747474"/><rect x="537" y="134" width="1" height="3" fill="#747474"/><rect x="547" y="117" width="1" height="20" fill="#7c7c7c"/><text x="548.5" y="133" font-size="12.5" fill="#bcbcbc" font-family="Liberation Sans, sans-serif" textLength="19.799999999999997" lengthAdjust="spacingAndGlyphs">200</text><rect x="556" y="134" width="1" height="3" fill="#747474"/><rect x="565" y="134" width="1" height="3" fill="#747474"/><rect x="574" y="134" width="1" height="3" fill="#747474"/><rect x="583" y="134" width="1" height="3" fill="#747474"/><rect x="592" y="117" width="1" height="20" fill="#7c7c7c"/><text x="593.5" y="133" font-size="12.5" fill="#bcbcbc" font-family="Liberation Sans, sans-serif" textLength="19.799999999999997" lengthAdjust="spacingAndGlyphs">250</text><rect x="601" y="134" width="1" height="3" fill="#747474"/><rect x="610" y="134" width="1" height="3" fill="#747474"/><rect x="619" y="134" width="1" height="3" fill="#747474"/><rect x="628" y="134" width="1" height="3" fill="#747474"/><rect x="637" y="117" width="1" height="20" fill="#7c7c7c"/><text x="638.5" y="133" font-size="12.5" fill="#bcbcbc" font-family="Liberation Sans, sans-serif" textLength="19.799999999999997" lengthAdjust="spacingAndGlyphs">300</text><rect x="646" y="134" width="1" height="3" fill="#747474"/><rect x="655" y="134" width="1" height="3" fill="#747474"/><rect x="664" y="134" width="1" height="3" fill="#747474"/><rect x="673" y="134" width="1" height="3" fill="#747474"/><rect x="682" y="117" width="1" height="20" fill="#7c7c7c"/><text x="683.5" y="133" font-size="12.5" fill="#bcbcbc" font-family="Liberation Sans, sans-serif" textLength="19.799999999999997" lengthAdjust="spacingAndGlyphs">350</text><rect x="691" y="134" width="1" height="3" fill="#747474"/><rect x="700" y="134" width="1" height="3" fill="#747474"/><rect x="709" y="134" width="1" height="3" fill="#747474"/><rect x="718" y="134" width="1" height="3" fill="#747474"/><rect x="727" y="117" width="1" height="20" fill="#7c7c7c"/><text x="728.5" y="133" font-size="12.5" fill="#bcbcbc" font-family="Liberation Sans, sans-serif" textLength="19.799999999999997" lengthAdjust="spacingAndGlyphs">400</text><rect x="736" y="134" width="1" height="3" fill="#747474"/><rect x="745" y="134" width="1" height="3" fill="#747474"/><rect x="754" y="134" width="1" height="3" fill="#747474"/><rect x="763" y="134" width="1" height="3" fill="#747474"/><rect x="772" y="117" width="1" height="20" fill="#7c7c7c"/><text x="773.5" y="133" font-size="12.5" fill="#bcbcbc" font-family="Liberation Sans, sans-serif" textLength="19.799999999999997" lengthAdjust="spacingAndGlyphs">450</text><rect x="781" y="134" width="1" height="3" fill="#747474"/><rect x="790" y="134" width="1" height="3" fill="#747474"/><rect x="799" y="134" width="1" height="3" fill="#747474"/><rect x="808" y="134" width="1" height="3" fill="#747474"/><rect x="817" y="117" width="1" height="20" fill="#7c7c7c"/><text x="818.5" y="133" font-size="12.5" fill="#bcbcbc" font-family="Liberation Sans, sans-serif" textLength="19.799999999999997" lengthAdjust="spacingAndGlyphs">500</text><rect x="826" y="134" width="1" height="3" fill="#747474"/><rect x="835" y="134" width="1" height="3" fill="#747474"/><rect x="844" y="134" width="1" height="3" fill="#747474"/><rect x="853" y="134" width="1" height="3" fill="#747474"/><rect x="862" y="117" width="1" height="20" fill="#7c7c7c"/><text x="863.5" y="133" font-size="12.5" fill="#bcbcbc" font-family="Liberation Sans, sans-serif" textLength="19.799999999999997" lengthAdjust="spacingAndGlyphs">550</text><rect x="871" y="134" width="1" height="3" fill="#747474"/><rect x="880" y="134" width="1" height="3" fill="#747474"/><rect x="890" y="134" width="1" height="3" fill="#747474"/><rect x="899" y="134" width="1" height="3" fill="#747474"/><rect x="908" y="117" width="1" height="20" fill="#7c7c7c"/><text x="909.5" y="133" font-size="12.5" fill="#bcbcbc" font-family="Liberation Sans, sans-serif" textLength="19.799999999999997" lengthAdjust="spacingAndGlyphs">600</text><rect x="917" y="134" width="1" height="3" fill="#747474"/><rect x="926" y="134" width="1" height="3" fill="#747474"/><rect x="935" y="134" width="1" height="3" fill="#747474"/><rect x="944" y="134" width="1" height="3" fill="#747474"/><rect x="953" y="117" width="1" height="20" fill="#7c7c7c"/><text x="954.5" y="133" font-size="12.5" fill="#bcbcbc" font-family="Liberation Sans, sans-serif" textLength="19.799999999999997" lengthAdjust="spacingAndGlyphs">650</text><rect x="962" y="134" width="1" height="3" fill="#747474"/><rect x="971" y="134" width="1" height="3" fill="#747474"/><rect x="980" y="134" width="1" height="3" fill="#747474"/><rect x="989" y="134" width="1" height="3" fill="#747474"/><rect x="998" y="117" width="1" height="20" fill="#7c7c7c"/><text x="999.5" y="133" font-size="12.5" fill="#bcbcbc" font-family="Liberation Sans, sans-serif" textLength="19.799999999999997" lengthAdjust="spacingAndGlyphs">700</text><rect x="1007" y="134" width="1" height="3" fill="#747474"/><rect x="1016" y="134" width="1" height="3" fill="#747474"/><rect x="1025" y="134" width="1" height="3" fill="#747474"/><rect x="1034" y="134" width="1" height="3" fill="#747474"/><rect x="1043" y="117" width="1" height="20" fill="#7c7c7c"/><text x="1044.5" y="133" font-size="12.5" fill="#bcbcbc" font-family="Liberation Sans, sans-serif" textLength="19.799999999999997" lengthAdjust="spacingAndGlyphs">750</text><rect x="1052" y="134" width="1" height="3" fill="#747474"/><rect x="1061" y="134" width="1" height="3" fill="#747474"/><rect x="1070" y="134" width="1" height="3" fill="#747474"/><rect x="1079" y="134" width="1" height="3" fill="#747474"/><rect x="1088" y="117" width="1" height="20" fill="#7c7c7c"/><text x="1089.5" y="133" font-size="12.5" fill="#bcbcbc" font-family="Liberation Sans, sans-serif" textLength="19.799999999999997" lengthAdjust="spacingAndGlyphs">800</text><rect x="1097" y="134" width="1" height="3" fill="#747474"/><rect x="1106" y="134" width="1" height="3" fill="#747474"/><rect x="1115" y="134" width="1" height="3" fill="#747474"/><rect x="1124" y="134" width="1" height="3" fill="#747474"/><rect x="1133" y="117" width="1" height="20" fill="#7c7c7c"/><text x="1134.5" y="133" font-size="12.5" fill="#bcbcbc" font-family="Liberation Sans, sans-serif" textLength="19.799999999999997" lengthAdjust="spacingAndGlyphs">850</text><rect x="1142" y="134" width="1" height="3" fill="#747474"/><rect x="1151" y="134" width="1" height="3" fill="#747474"/><rect x="1160" y="134" width="1" height="3" fill="#747474"/><rect x="1169" y="134" width="1" height="3" fill="#747474"/><rect x="1178" y="117" width="1" height="20" fill="#7c7c7c"/><text x="1179.5" y="133" font-size="12.5" fill="#bcbcbc" font-family="Liberation Sans, sans-serif" textLength="19.799999999999997" lengthAdjust="spacingAndGlyphs">900</text><rect x="1187" y="134" width="1" height="3" fill="#747474"/><rect x="1196" y="134" width="1" height="3" fill="#747474"/><rect x="1205" y="134" width="1" height="3" fill="#747474"/><rect x="1214" y="134" width="1" height="3" fill="#747474"/><rect x="1223" y="117" width="1" height="20" fill="#7c7c7c"/><text x="1224.5" y="133" font-size="12.5" fill="#bcbcbc" font-family="Liberation Sans, sans-serif" textLength="19.799999999999997" lengthAdjust="spacingAndGlyphs">950</text><rect x="1232" y="134" width="1" height="3" fill="#747474"/><rect x="1242" y="134" width="1" height="3" fill="#747474"/><rect x="1251" y="134" width="1" height="3" fill="#747474"/><rect x="1260" y="134" width="1" height="3" fill="#747474"/><rect x="1269" y="117" width="1" height="20" fill="#7c7c7c"/><text x="1270.5" y="133" font-size="11.5" fill="#bcbcbc" font-family="Liberation Sans, sans-serif" textLength="24.4" lengthAdjust="spacingAndGlyphs">1000</text><rect x="1278" y="134" width="1" height="3" fill="#747474"/><rect x="1287" y="134" width="1" height="3" fill="#747474"/><rect x="1296" y="134" width="1" height="3" fill="#747474"/><rect x="1305" y="134" width="1" height="3" fill="#747474"/><rect x="1314" y="117" width="1" height="20" fill="#7c7c7c"/><text x="1315.5" y="133" font-size="11.5" fill="#bcbcbc" font-family="Liberation Sans, sans-serif" textLength="24.4" lengthAdjust="spacingAndGlyphs">1050</text><rect x="1323" y="134" width="1" height="3" fill="#747474"/><rect x="1332" y="134" width="1" height="3" fill="#747474"/><rect x="1341" y="134" width="1" height="3" fill="#747474"/><rect x="1350" y="134" width="1" height="3" fill="#747474"/><rect x="1359" y="117" width="1" height="20" fill="#7c7c7c"/><text x="1360.5" y="133" font-size="11.5" fill="#bcbcbc" font-family="Liberation Sans, sans-serif" textLength="24.4" lengthAdjust="spacingAndGlyphs">1100</text><rect x="1368" y="134" width="1" height="3" fill="#747474"/><rect x="1377" y="134" width="1" height="3" fill="#747474"/></svg>
<div class="a" style="left:72px;top:117px;width:4px;height:20px;overflow:hidden"><div class="t" style="left:-4px;top:3px;font-size:12.500px;color:#bcbcbc;line-height:14px">0</div></div>
<svg style="left:51px;top:138px" width="21" height="870" viewBox="51 138 21 870"><text x="52.300" y="147.9" font-size="12" fill="#bcbcbc" font-family="Liberation Sans, sans-serif">0</text><text x="52.300" y="160.3" font-size="12" fill="#bcbcbc" font-family="Liberation Sans, sans-serif">0</text><rect x="68" y="140" width="3" height="1" fill="#747474"/><rect x="68" y="149" width="3" height="1" fill="#747474"/><rect x="68" y="158" width="3" height="1" fill="#747474"/><rect x="51" y="167" width="20" height="1" fill="#7c7c7c"/><text x="52.300" y="180.5" font-size="12" fill="#bcbcbc" font-family="Liberation Sans, sans-serif">5</text><text x="52.300" y="192.9" font-size="12" fill="#bcbcbc" font-family="Liberation Sans, sans-serif">0</text><rect x="68" y="176" width="3" height="1" fill="#747474"/><rect x="68" y="185" width="3" height="1" fill="#747474"/><rect x="68" y="194" width="3" height="1" fill="#747474"/><rect x="68" y="203" width="3" height="1" fill="#747474"/><rect x="51" y="212" width="20" height="1" fill="#7c7c7c"/><text x="52.300" y="225.5" font-size="12" fill="#bcbcbc" font-family="Liberation Sans, sans-serif">0</text><rect x="68" y="221" width="3" height="1" fill="#747474"/><rect x="68" y="230" width="3" height="1" fill="#747474"/><rect x="68" y="239" width="3" height="1" fill="#747474"/><rect x="68" y="248" width="3" height="1" fill="#747474"/><rect x="51" y="257" width="20" height="1" fill="#7c7c7c"/><text x="52.300" y="270.5" font-size="12" fill="#bcbcbc" font-family="Liberation Sans, sans-serif">5</text><text x="52.300" y="282.9" font-size="12" fill="#bcbcbc" font-family="Liberation Sans, sans-serif">0</text><rect x="68" y="266" width="3" height="1" fill="#747474"/><rect x="68" y="275" width="3" height="1" fill="#747474"/><rect x="68" y="284" width="3" height="1" fill="#747474"/><rect x="68" y="293" width="3" height="1" fill="#747474"/><rect x="51" y="302" width="20" height="1" fill="#7c7c7c"/><text x="52.300" y="315.5" font-size="12" fill="#bcbcbc" font-family="Liberation Sans, sans-serif">1</text><text x="52.300" y="327.9" font-size="12" fill="#bcbcbc" font-family="Liberation Sans, sans-serif">0</text><text x="52.300" y="340.3" font-size="12" fill="#bcbcbc" font-family="Liberation Sans, sans-serif">0</text><rect x="68" y="311" width="3" height="1" fill="#747474"/><rect x="68" y="320" width="3" height="1" fill="#747474"/><rect x="68" y="329" width="3" height="1" fill="#747474"/><rect x="68" y="338" width="3" height="1" fill="#747474"/><rect x="51" y="347" width="20" height="1" fill="#7c7c7c"/><text x="52.300" y="360.5" font-size="12" fill="#bcbcbc" font-family="Liberation Sans, sans-serif">1</text><text x="52.300" y="372.9" font-size="12" fill="#bcbcbc" font-family="Liberation Sans, sans-serif">5</text><text x="52.300" y="385.3" font-size="12" fill="#bcbcbc" font-family="Liberation Sans, sans-serif">0</text><rect x="68" y="356" width="3" height="1" fill="#747474"/><rect x="68" y="365" width="3" height="1" fill="#747474"/><rect x="68" y="374" width="3" height="1" fill="#747474"/><rect x="68" y="383" width="3" height="1" fill="#747474"/><rect x="51" y="393" width="20" height="1" fill="#7c7c7c"/><text x="52.300" y="406.5" font-size="12" fill="#bcbcbc" font-family="Liberation Sans, sans-serif">2</text><text x="52.300" y="418.9" font-size="12" fill="#bcbcbc" font-family="Liberation Sans, sans-serif">0</text><text x="52.300" y="431.3" font-size="12" fill="#bcbcbc" font-family="Liberation Sans, sans-serif">0</text><rect x="68" y="402" width="3" height="1" fill="#747474"/><rect x="68" y="411" width="3" height="1" fill="#747474"/><rect x="68" y="420" width="3" height="1" fill="#747474"/><rect x="68" y="429" width="3" height="1" fill="#747474"/><rect x="51" y="438" width="20" height="1" fill="#7c7c7c"/><text x="52.300" y="451.5" font-size="12" fill="#bcbcbc" font-family="Liberation Sans, sans-serif">2</text><text x="52.300" y="463.9" font-size="12" fill="#bcbcbc" font-family="Liberation Sans, sans-serif">5</text><text x="52.300" y="476.3" font-size="12" fill="#bcbcbc" font-family="Liberation Sans, sans-serif">0</text><rect x="68" y="447" width="3" height="1" fill="#747474"/><rect x="68" y="456" width="3" height="1" fill="#747474"/><rect x="68" y="465" width="3" height="1" fill="#747474"/><rect x="68" y="474" width="3" height="1" fill="#747474"/><rect x="51" y="483" width="20" height="1" fill="#7c7c7c"/><text x="52.300" y="496.5" font-size="12" fill="#bcbcbc" font-family="Liberation Sans, sans-serif">3</text><text x="52.300" y="508.9" font-size="12" fill="#bcbcbc" font-family="Liberation Sans, sans-serif">0</text><text x="52.300" y="521.3" font-size="12" fill="#bcbcbc" font-family="Liberation Sans, sans-serif">0</text><rect x="68" y="492" width="3" height="1" fill="#747474"/><rect x="68" y="501" width="3" height="1" fill="#747474"/><rect x="68" y="510" width="3" height="1" fill="#747474"/><rect x="68" y="519" width="3" height="1" fill="#747474"/><rect x="51" y="528" width="20" height="1" fill="#7c7c7c"/><text x="52.300" y="541.5" font-size="12" fill="#bcbcbc" font-family="Liberation Sans, sans-serif">3</text><text x="52.300" y="553.9" font-size="12" fill="#bcbcbc" font-family="Liberation Sans, sans-serif">5</text><text x="52.300" y="566.3" font-size="12" fill="#bcbcbc" font-family="Liberation Sans, sans-serif">0</text><rect x="68" y="537" width="3" height="1" fill="#747474"/><rect x="68" y="546" width="3" height="1" fill="#747474"/><rect x="68" y="555" width="3" height="1" fill="#747474"/><rect x="68" y="564" width="3" height="1" fill="#747474"/><rect x="51" y="573" width="20" height="1" fill="#7c7c7c"/><text x="52.300" y="586.5" font-size="12" fill="#bcbcbc" font-family="Liberation Sans, sans-serif">4</text><text x="52.300" y="598.9" font-size="12" fill="#bcbcbc" font-family="Liberation Sans, sans-serif">0</text><text x="52.300" y="611.3" font-size="12" fill="#bcbcbc" font-family="Liberation Sans, sans-serif">0</text><rect x="68" y="582" width="3" height="1" fill="#747474"/><rect x="68" y="591" width="3" height="1" fill="#747474"/><rect x="68" y="600" width="3" height="1" fill="#747474"/><rect x="68" y="609" width="3" height="1" fill="#747474"/><rect x="51" y="618" width="20" height="1" fill="#7c7c7c"/><text x="52.300" y="631.5" font-size="12" fill="#bcbcbc" font-family="Liberation Sans, sans-serif">4</text><text x="52.300" y="643.9" font-size="12" fill="#bcbcbc" font-family="Liberation Sans, sans-serif">5</text><text x="52.300" y="656.3" font-size="12" fill="#bcbcbc" font-family="Liberation Sans, sans-serif">0</text><rect x="68" y="627" width="3" height="1" fill="#747474"/><rect x="68" y="636" width="3" height="1" fill="#747474"/><rect x="68" y="645" width="3" height="1" fill="#747474"/><rect x="68" y="654" width="3" height="1" fill="#747474"/><rect x="51" y="663" width="20" height="1" fill="#7c7c7c"/><text x="52.300" y="676.5" font-size="12" fill="#bcbcbc" font-family="Liberation Sans, sans-serif">5</text><text x="52.300" y="688.9" font-size="12" fill="#bcbcbc" font-family="Liberation Sans, sans-serif">0</text><text x="52.300" y="701.3" font-size="12" fill="#bcbcbc" font-family="Liberation Sans, sans-serif">0</text><rect x="68" y="672" width="3" height="1" fill="#747474"/><rect x="68" y="681" width="3" height="1" fill="#747474"/><rect x="68" y="690" width="3" height="1" fill="#747474"/><rect x="68" y="699" width="3" height="1" fill="#747474"/><rect x="51" y="708" width="20" height="1" fill="#7c7c7c"/><text x="52.300" y="721.5" font-size="12" fill="#bcbcbc" font-family="Liberation Sans, sans-serif">5</text><text x="52.300" y="733.9" font-size="12" fill="#bcbcbc" font-family="Liberation Sans, sans-serif">5</text><text x="52.300" y="746.3" font-size="12" fill="#bcbcbc" font-family="Liberation Sans, sans-serif">0</text><rect x="68" y="717" width="3" height="1" fill="#747474"/><rect x="68" y="726" width="3" height="1" fill="#747474"/><rect x="68" y="736" width="3" height="1" fill="#747474"/><rect x="68" y="745" width="3" height="1" fill="#747474"/><rect x="51" y="754" width="20" height="1" fill="#7c7c7c"/><text x="52.300" y="767.5" font-size="12" fill="#bcbcbc" font-family="Liberation Sans, sans-serif">6</text><text x="52.300" y="779.9" font-size="12" fill="#bcbcbc" font-family="Liberation Sans, sans-serif">0</text><text x="52.300" y="792.3" font-size="12" fill="#bcbcbc" font-family="Liberation Sans, sans-serif">0</text><rect x="68" y="763" width="3" height="1" fill="#747474"/><rect x="68" y="772" width="3" height="1" fill="#747474"/><rect x="68" y="781" width="3" height="1" fill="#747474"/><rect x="68" y="790" width="3" height="1" fill="#747474"/><rect x="51" y="799" width="20" height="1" fill="#7c7c7c"/><text x="52.300" y="812.5" font-size="12" fill="#bcbcbc" font-family="Liberation Sans, sans-serif">6</text><text x="52.300" y="824.9" font-size="12" fill="#bcbcbc" font-family="Liberation Sans, sans-serif">5</text><text x="52.300" y="837.3" font-size="12" fill="#bcbcbc" font-family="Liberation Sans, sans-serif">0</text><rect x="68" y="808" width="3" height="1" fill="#747474"/><rect x="68" y="817" width="3" height="1" fill="#747474"/><rect x="68" y="826" width="3" height="1" fill="#747474"/><rect x="68" y="835" width="3" height="1" fill="#747474"/><rect x="51" y="844" width="20" height="1" fill="#7c7c7c"/><text x="52.300" y="857.5" font-size="12" fill="#bcbcbc" font-family="Liberation Sans, sans-serif">7</text><text x="52.300" y="869.9" font-size="12" fill="#bcbcbc" font-family="Liberation Sans, sans-serif">0</text><text x="52.300" y="882.3" font-size="12" fill="#bcbcbc" font-family="Liberation Sans, sans-serif">0</text><rect x="68" y="853" width="3" height="1" fill="#747474"/><rect x="68" y="862" width="3" height="1" fill="#747474"/><rect x="68" y="871" width="3" height="1" fill="#747474"/><rect x="68" y="880" width="3" height="1" fill="#747474"/><rect x="51" y="889" width="20" height="1" fill="#7c7c7c"/><text x="52.300" y="902.5" font-size="12" fill="#bcbcbc" font-family="Liberation Sans, sans-serif">7</text><text x="52.300" y="914.9" font-size="12" fill="#bcbcbc" font-family="Liberation Sans, sans-serif">5</text><text x="52.300" y="927.3" font-size="12" fill="#bcbcbc" font-family="Liberation Sans, sans-serif">0</text><rect x="68" y="898" width="3" height="1" fill="#747474"/><rect x="68" y="907" width="3" height="1" fill="#747474"/><rect x="68" y="916" width="3" height="1" fill="#747474"/><rect x="68" y="925" width="3" height="1" fill="#747474"/><rect x="51" y="934" width="20" height="1" fill="#7c7c7c"/><text x="52.300" y="947.5" font-size="12" fill="#bcbcbc" font-family="Liberation Sans, sans-serif">8</text><text x="52.300" y="959.9" font-size="12" fill="#bcbcbc" font-family="Liberation Sans, sans-serif">0</text><text x="52.300" y="972.3" font-size="12" fill="#bcbcbc" font-family="Liberation Sans, sans-serif">0</text><rect x="68" y="943" width="3" height="1" fill="#747474"/><rect x="68" y="952" width="3" height="1" fill="#747474"/><rect x="68" y="961" width="3" height="1" fill="#747474"/><rect x="68" y="970" width="3" height="1" fill="#747474"/><rect x="51" y="979" width="20" height="1" fill="#7c7c7c"/><text x="52.300" y="992.5" font-size="12" fill="#bcbcbc" font-family="Liberation Sans, sans-serif">8</text><text x="52.300" y="1004.9" font-size="12" fill="#bcbcbc" font-family="Liberation Sans, sans-serif">5</text><rect x="68" y="988" width="3" height="1" fill="#747474"/><rect x="68" y="997" width="3" height="1" fill="#747474"/><rect x="68" y="1006" width="3" height="1" fill="#747474"/></svg>
<div class="a" style="left:365px;top:211px;width:724px;height:724px;background:#1d2b2c"></div>
<div class="a" style="left:366px;top:212px;width:722px;height:722px;background:radial-gradient(circle farthest-corner at 50% 50%,#ff0000 0%,#ff00ff 15.800%,#0000ff 33.500%,#00ffff 49.700%,#00ff00 67.300%,#ffff00 83.800%,#ff0000 100%)"></div>
<div class="a" style="left:617px;top:475px;font-family:'Liberation Serif',serif;font-weight:bold;font-size:194px;line-height:194px;height:194px;color:#fff;white-space:nowrap;transform-origin:0 0;transform:scaleX(1.08)">1</div>
<div class="a" style="left:720px;top:475px;font-family:'Liberation Serif',serif;font-weight:bold;font-size:194px;line-height:194px;height:194px;color:#fff;white-space:nowrap;transform-origin:0 0;transform:scaleX(1.135)">0</div>
<div class="a" style="left:1090px;top:117px;width:1px;height:10px;background:#e8e8e8;"></div>
<div class="a" style="left:52px;top:549px;width:11px;height:1px;background:#e8e8e8;"></div>
<div class="a" style="left:51px;top:1008px;width:1353px;height:22px;background:#4a4a4a;"></div>
<div class="a" style="left:51px;top:1008px;width:60px;height:19px;background:#474747;"></div>
<div class="a" style="left:111px;top:1008px;width:230px;height:19px;background:#535353;"></div>
<div class="a" style="left:1383px;top:1008px;width:21px;height:22px;background:#535353;"></div>
<div class="a" style="left:51px;top:1027px;width:290px;height:3px;background:#4c4c4c;"></div>
<div class="t" style="left:58px;top:1008px;font-size:13px;color:#e8e8e8;">90.16%</div>
<div class="t" style="left:160px;top:1008px;font-size:13.5px;color:#d0d0d0;">文档:1.83M/4.42M</div>
<svg style="left:327px;top:1012px" width="6" height="12" viewBox="0 0 6 12"><path d="M1 1c3 3 3 7 0 10" fill="none" stroke="#d0d0d0" stroke-width="1.200"/></svg>
<div class="a" style="left:1404px;top:82px;width:2px;height:948px;background:#383838;"></div>
<div class="a" style="left:1406px;top:82px;width:48px;height:948px;background:#535353;"></div>
<div class="a" style="left:1406px;top:82px;width:48px;height:14px;background:#424242;"></div>
<div class="a" style="left:1454px;top:82px;width:2px;height:948px;background:#383838;"></div>
<svg style="left:1438px;top:85.5px" width="8" height="5" viewBox="0 0 8 5"><path d="M3 0l-3 2.500l3 2.500zM7 0l-3 2.500l3 2.500z" fill="#cfcfcf"/></svg>
<div class="a" style="left:1418.0px;top:100px;width:1px;height:5px;background:#464646;"></div>
<div class="a" style="left:1420.5px;top:100px;width:1px;height:5px;background:#464646;"></div>
<div class="a" style="left:1423.0px;top:100px;width:1px;height:5px;background:#464646;"></div>
<div class="a" style="left:1425.5px;top:100px;width:1px;height:5px;background:#464646;"></div>
<div class="a" style="left:1428.0px;top:100px;width:1px;height:5px;background:#464646;"></div>
<div class="a" style="left:1430.5px;top:100px;width:1px;height:5px;background:#464646;"></div>
<div class="a" style="left:1433.0px;top:100px;width:1px;height:5px;background:#464646;"></div>
<div class="a" style="left:1435.5px;top:100px;width:1px;height:5px;background:#464646;"></div>
<div class="a" style="left:1438.0px;top:100px;width:1px;height:5px;background:#464646;"></div>
<div class="a" style="left:1406px;top:146px;width:48px;height:1px;background:#3c3c3c;"></div>
<div class="a" style="left:1406px;top:147px;width:48px;height:1px;background:#4b4b4b;"></div>
<div class="a" style="left:1418.0px;top:152px;width:1px;height:5px;background:#464646;"></div>
<div class="a" style="left:1420.5px;top:152px;width:1px;height:5px;background:#464646;"></div>
<div class="a" style="left:1423.0px;top:152px;width:1px;height:5px;background:#464646;"></div>
<div class="a" style="left:1425.5px;top:152px;width:1px;height:5px;background:#464646;"></div>
<div class="a" style="left:1428.0px;top:152px;width:1px;height:5px;background:#464646;"></div>
<div class="a" style="left:1430.5px;top:152px;width:1px;height:5px;background:#464646;"></div>
<div class="a" style="left:1433.0px;top:152px;width:1px;height:5px;background:#464646;"></div>
<div class="a" style="left:1435.5px;top:152px;width:1px;height:5px;background:#464646;"></div>
<div class="a" style="left:1438.0px;top:152px;width:1px;height:5px;background:#464646;"></div>
<div class="a" style="left:1406px;top:232px;width:48px;height:1px;background:#3c3c3c;"></div>
<div class="a" style="left:1406px;top:233px;width:48px;height:1px;background:#4b4b4b;"></div>
<div class="a" style="left:1418.0px;top:239px;width:1px;height:5px;background:#464646;"></div>
<div class="a" style="left:1420.5px;top:239px;width:1px;height:5px;background:#464646;"></div>
<div class="a" style="left:1423.0px;top:239px;width:1px;height:5px;background:#464646;"></div>
<div class="a" style="left:1425.5px;top:239px;width:1px;height:5px;background:#464646;"></div>
<div class="a" style="left:1428.0px;top:239px;width:1px;height:5px;background:#464646;"></div>
<div class="a" style="left:1430.5px;top:239px;width:1px;height:5px;background:#464646;"></div>
<div class="a" style="left:1433.0px;top:239px;width:1px;height:5px;background:#464646;"></div>
<div class="a" style="left:1435.5px;top:239px;width:1px;height:5px;background:#464646;"></div>
<div class="a" style="left:1438.0px;top:239px;width:1px;height:5px;background:#464646;"></div>
<div class="a" style="left:1406px;top:319px;width:48px;height:1px;background:#3c3c3c;"></div>
<div class="a" style="left:1406px;top:320px;width:48px;height:1px;background:#4b4b4b;"></div>
<div class="a" style="left:1418.0px;top:324px;width:1px;height:5px;background:#464646;"></div>
<div class="a" style="left:1420.5px;top:324px;width:1px;height:5px;background:#464646;"></div>
<div class="a" style="left:1423.0px;top:324px;width:1px;height:5px;background:#464646;"></div>
<div class="a" style="left:1425.5px;top:324px;width:1px;height:5px;background:#464646;"></div>
<div class="a" style="left:1428.0px;top:324px;width:1px;height:5px;background:#464646;"></div>
<div class="a" style="left:1430.5px;top:324px;width:1px;height:5px;background:#464646;"></div>
<div class="a" style="left:1433.0px;top:324px;width:1px;height:5px;background:#464646;"></div>
<div class="a" style="left:1435.5px;top:324px;width:1px;height:5px;background:#464646;"></div>
<div class="a" style="left:1438.0px;top:324px;width:1px;height:5px;background:#464646;"></div>
<div class="a" style="left:1406px;top:370px;width:48px;height:1px;background:#3c3c3c;"></div>
<div class="a" style="left:1406px;top:371px;width:48px;height:1px;background:#4b4b4b;"></div>
<svg style="left:1422px;top:115px" width="20" height="22" viewBox="0 0 20 22"><rect x="0.700" y="0.700" width="4.800" height="4.800" fill="none" stroke="#dcdcdc" stroke-width="1.300"/><rect x="0.700" y="8.200" width="4.800" height="4.800" fill="none" stroke="#dcdcdc" stroke-width="1.300"/><rect x="0" y="15.200" width="6.200" height="5.800" fill="#dcdcdc"/><path d="M10.500 19.500c7-3.500 8-10.500 3-14.500l-1.500 3l-2.500-6.500l8 0.500l-2 2c5.500 5 3 13-5 15.500z" fill="#dcdcdc"/></svg>
<svg style="left:1418px;top:167px" width="27" height="22" viewBox="0 0 27 22"><g fill="#dcdcdc"><rect x="0.500" y="1" width="2.200" height="2.200"/><rect x="4" y="1.400" width="6" height="1.400"/><rect x="0.500" y="5" width="2.200" height="2.200"/><rect x="4" y="5.400" width="6" height="1.400"/><rect x="0.500" y="9" width="2.200" height="2.200"/><rect x="4" y="9.400" width="6" height="1.400"/><path d="M26 3.500c-5 2-10 6.500-13 10l2.500 2.500c4-3 8.500-8 10.500-12.500z"/><path d="M12 14.500c-3.500-0.300-5 2-5.500 4.500c-0.500 1-1.500 1.700-2.500 2c4.500 1 10 0.200 10.700-4z"/></g></svg>
<svg style="left:1417px;top:203px" width="28" height="22" viewBox="0 0 28 22"><g fill="#dcdcdc"><path d="M0.300 4.200C4 1 9 0.500 11.500 3.500C11.800 6 9 8 6.500 8C4 7.500 2 6 0.300 4.200z"/><rect x="13" y="3.200" width="13.500" height="2.600" rx="1"/><rect x="3" y="13" width="12.500" height="2.600" rx="1"/><path d="M17 14.300L25.500 9C27.500 12.500 27.500 17 25.500 20.300z"/></g></svg>
<div class="t" style="left:1421px;top:251px;font-size:22px;line-height:28px;height:28px;color:#dcdcdc">A</div>
<div class="a" style="left:1440px;top:252px;width:1.5px;height:25px;background:#dcdcdc;"></div>
<div class="t" style="left:1421px;top:284px;font-size:24px;line-height:30px;height:30px;left:1423px;color:#dcdcdc;font-weight:bold">¶</div>
<svg style="left:1419px;top:339px" width="24" height="22" viewBox="0 0 24 22"><path d="M7.500 1l6 2.500v7l-6 3l-6-3v-7z" fill="none" stroke="#dcdcdc" stroke-width="1.200"/><path d="M1.500 3.500l6 2.500l6-2.500M7.500 6v7.500" fill="none" stroke="#dcdcdc" stroke-width="1"/><rect x="16" y="1" width="6" height="5" fill="#dcdcdc"/><rect x="16" y="8" width="6" height="5" fill="#dcdcdc"/><rect x="1" y="16" width="21" height="5" fill="#dcdcdc"/><path d="M17.500 17.500h3l-1.500 2z" fill="#535353"/></svg>
<div class="a" style="left:1456px;top:82px;width:461px;height:14px;background:#424242;"></div>
<div class="a" style="left:1456px;top:95px;width:461px;height:1px;background:#383838;"></div>
<svg style="left:1904px;top:85.5px" width="8" height="5" viewBox="0 0 8 5"><path d="M0 0l3 2.500l-3 2.500zM4 0l3 2.500l-3 2.500z" fill="#cfcfcf"/></svg>
<div class="a" style="left:1456px;top:96px;width:461px;height:34px;background:#424242;"></div>
<div class="a" style="left:1456px;top:130px;width:461px;height:1px;background:#3b3b3b;"></div>
<div class="a" style="left:1456px;top:96px;width:54px;height:35px;background:#535353;"></div>
<div class="a" style="left:1510px;top:96px;width:1px;height:34px;background:#3a3a3a;"></div>
<div class="t" style="left:1468px;top:103.5px;font-size:15px;color:#f2f2f2">颜色</div>
<div class="a" style="left:1565px;top:96px;width:1px;height:34px;background:#3a3a3a;"></div>
<div class="t" style="left:1522px;top:103.5px;font-size:15px;color:#b4b4b4">色板</div>
<div class="a" style="left:1898px;top:108px;width:12px;height:1px;background:#bdbdbd;"></div>
<div class="a" style="left:1898px;top:111px;width:12px;height:1px;background:#bdbdbd;"></div>
<div class="a" style="left:1898px;top:114px;width:12px;height:1px;background:#bdbdbd;"></div>
<div class="a" style="left:1898px;top:117px;width:12px;height:1px;background:#bdbdbd;"></div>
<div class="a" style="left:1456px;top:131px;width:461px;height:140px;background:#535353;"></div>
<div class="a" style="left:1456px;top:271px;width:461px;height:4px;background:#383838;"></div>
<div class="a" style="left:1481px;top:157px;width:22px;height:22px;background:#0000ff;border:1px solid #fff;outline:1px solid #1a1a1a"></div>
<div class="a" style="left:1466px;top:142px;width:28px;height:28px;background:#7e7e7e;"></div>
<div class="a" style="left:1469px;top:145px;width:21px;height:21px;background:#ff0000;border:1px solid #fff;outline:1px solid #1a1a1a"></div>
<svg style="left:1466px;top:209px" width="16" height="15" viewBox="0 0 16 15"><path d="M8 0.500L15.500 14.500H0.500z" fill="#e0e0e0"/><rect x="7.200" y="5" width="1.800" height="5.500" fill="#444"/><rect x="7.200" y="11.500" width="1.800" height="1.800" fill="#444"/></svg>
<div class="a" style="left:1486.500px;top:210.500px;width:15.500px;height:15.500px;background:#e3181b;border:1px solid #fff;outline:1px solid #333"></div>
<div class="a" style="left:1512px;top:139px;width:342px;height:105px;background:linear-gradient(to bottom,rgba(0,0,0,0),#000),linear-gradient(to right,#fff,#ff0000)"></div>
<div class="a" style="left:1512px;top:139px;width:342px;height:105px;overflow:hidden"><svg style="left:332px;top:-3.500px" width="13" height="13" viewBox="0 0 13 13"><circle cx="6.500" cy="6.500" r="5.500" fill="none" stroke="#fff" stroke-width="1"/></svg></div>
<div class="a" style="left:1875px;top:139px;width:24px;height:105px;background:linear-gradient(to bottom,#ff0000 0%,#ff00ff 16.667%,#0000ff 33.333%,#00ffff 50%,#00ff00 66.667%,#ffff00 83.333%,#ff0000 100%)"></div>
<svg style="left:1863.5px;top:136px" width="10" height="10" viewBox="0 0 10 10"><path d="M1 0.600h3.800l4.400 4.400l-4.400 4.400h-3.800z" fill="#dedede" stroke="#3a3a3a" stroke-width="0.800"/></svg>
<div class="a" style="left:1456px;top:275px;width:461px;height:34px;background:#424242;"></div>
<div class="a" style="left:1456px;top:309px;width:461px;height:1px;background:#3b3b3b;"></div>
<div class="a" style="left:1456px;top:275px;width:53px;height:35px;background:#535353;"></div>
<div class="a" style="left:1509px;top:275px;width:1px;height:34px;background:#3a3a3a;"></div>
<div class="t" style="left:1468px;top:282.5px;font-size:15px;color:#f2f2f2">学习</div>
<div class="a" style="left:1558px;top:275px;width:1px;height:34px;background:#3a3a3a;"></div>
<div class="t" style="left:1521px;top:282.5px;font-size:15px;color:#b4b4b4">库</div>
<div class="a" style="left:1614px;top:275px;width:1px;height:34px;background:#3a3a3a;"></div>
<div class="t" style="left:1570px;top:282.5px;font-size:15px;color:#b4b4b4">调整</div>
<div class="a" style="left:1898px;top:287px;width:12px;height:1px;background:#bdbdbd;"></div>
<div class="a" style="left:1898px;top:290px;width:12px;height:1px;background:#bdbdbd;"></div>
<div class="a" style="left:1898px;top:293px;width:12px;height:1px;background:#bdbdbd;"></div>
<div class="a" style="left:1898px;top:296px;width:12px;height:1px;background:#bdbdbd;"></div>
<div class="a" style="left:1456px;top:310px;width:461px;height:276px;background:#535353;"></div>
<div class="a" style="left:1456px;top:586px;width:461px;height:4px;background:#383838;"></div>
<div class="t" style="left:1456px;top:339px;width:443px;text-align:center;font-size:22px;line-height:26px;height:26px;color:#ffffff">了解<span style="letter-spacing:-0.450px"> Photoshop</span></div>
<div class="t" style="left:1456px;top:377.500px;width:443px;text-align:center;font-size:20px;line-height:26px;height:26px;color:#ffffff">在应用程序内直接提供的分步指导教程。从</div>
<div class="t" style="left:1456px;top:403px;width:443px;text-align:center;font-size:20px;line-height:26px;height:26px;color:#ffffff">下面选取一个主题开始教程。</div>
<div class="a" style="left:1456px;top:310px;width:443px;height:276px;overflow:hidden">
<div class="a" style="left:13px;top:143px;width:420px;height:75px;background:#2d2d2d;border-radius:6px;overflow:hidden">
<svg style="left:0;top:0;filter:blur(0.600px)" width="125" height="75" viewBox="0 0 125 75">
<defs><linearGradient id="rm" x1="0" y1="0" x2="0" y2="1"><stop offset="0" stop-color="#12183a"/><stop offset="0.35" stop-color="#20264c"/><stop offset="0.75" stop-color="#181b36"/><stop offset="1" stop-color="#12142a"/></linearGradient>
<radialGradient id="gl" cx="0.5" cy="0.5" r="0.5"><stop offset="0" stop-color="#8f9be0" stop-opacity="0.380"/><stop offset="1" stop-color="#8f9be0" stop-opacity="0"/></radialGradient></defs>
<rect width="125" height="75" fill="url(#rm)"/>
<path d="M0 5L22 17H108L125 5V0H0z" fill="#10163a"/>
<path d="M0 5L22 17V58L0 75z" fill="#1d2247"/>
<path d="M108 17L125 5V75L108 58z" fill="#14162e"/>
<path d="M0 75L22 56H108L125 75z" fill="#1c1c30"/>
<ellipse cx="68" cy="50" rx="40" ry="22" fill="url(#gl)"/>
<rect x="27" y="24" width="9" height="23" fill="#0d1226"/><rect x="37" y="24" width="10" height="23" fill="#0a0e20"/>
<rect x="25" y="21" width="24" height="3" fill="#3b4270"/>
<rect x="56" y="20" width="6" height="38" fill="#0a0c18"/>
<path d="M60 21l11-1v37l-11 1z" fill="#b4bcec"/>
<path d="M62 24l7-0.500v14l-7 0.500zM62 41l7-0.500v14l-7 0.500z" fill="#99a2da"/>
<rect x="79" y="19" width="10" height="19" fill="#2a2b4f"/><rect x="80.500" y="21" width="7" height="15" fill="#3a3560"/>
<circle cx="96" cy="20" r="3.500" fill="#3b4270"/><circle cx="105" cy="29" r="4.500" fill="#3a406e"/><circle cx="110" cy="22" r="2.500" fill="#57536a"/><circle cx="116" cy="25" r="3.500" fill="#22264a"/>
<rect x="2" y="24" width="7" height="17" fill="#2a3162" transform="skewY(8)"/><rect x="12" y="24" width="5" height="11" fill="#3d4a8a" transform="skewY(8)"/>
<path d="M85 52c6-4 22-1 38 8l2 4v11H100L86 62z" fill="#2a2e55"/>
<path d="M86 51c7-4 22 0 37 9l-3 5c-12-6-24-9-34-7z" fill="#474d84"/>
<rect x="27" y="49" width="20" height="14" fill="#20233f"/><rect x="27" y="48" width="20" height="2" fill="#363b62"/>
<rect x="32" y="40" width="3" height="9" fill="#7d87c4"/>
<path d="M40 39l10-6l1 2l-10 6z" fill="#5d6394"/>
<circle cx="62" cy="7" r="1.800" fill="#9fb2e8"/><circle cx="62" cy="7" r="4" fill="#9fb2e8" opacity="0.250"/>
<path d="M0 52l12 2v21H0z" fill="#12142a"/>
<path d="M58 58h16l10 12H50z" fill="#6a74bc" opacity="0.450"/>
<path d="M70 66l12 2l6 5l-14-1z" fill="#2c3050"/>
</svg>
<div class="t" style="left:144px;top:25.500px;font-size:20.500px;line-height:26px;height:26px;color:#fff">基本技能</div>
<svg style="left:385px;top:27px" width="12" height="20" viewBox="0 0 12 20"><path d="M1.500 1.500L10 10L1.500 18.500" fill="none" stroke="#e6e6e6" stroke-width="1.500"/></svg>
</div>
<div class="a" style="left:13px;top:231px;width:420px;height:75px;background:#2d2d2d;border-radius:6px;overflow:hidden">
<svg style="left:0;top:0;filter:blur(0.700px)" width="125" height="75" viewBox="0 0 125 75">
<defs><linearGradient id="fl" x1="0" y1="0" x2="1" y2="0"><stop offset="0" stop-color="#f6ebe4"/><stop offset="0.450" stop-color="#efe7e6"/><stop offset="0.750" stop-color="#fbe3e3"/><stop offset="1" stop-color="#fff2ee"/></linearGradient>
<radialGradient id="pk" cx="0.5" cy="0.5" r="0.5"><stop offset="0" stop-color="#f28a8a" stop-opacity="0.700"/><stop offset="1" stop-color="#f9b7b7" stop-opacity="0"/></radialGradient></defs>
<rect width="125" height="75" fill="url(#fl)"/>
<rect x="0" y="12" width="32" height="12" fill="#f0d9c5" opacity="0.800"/>
<ellipse cx="8" cy="8" rx="5" ry="4" fill="#3a3030"/><rect x="6.500" y="10" width="3" height="8" fill="#4a4040"/>
<ellipse cx="115" cy="22" rx="14" ry="16" fill="url(#pk)"/><ellipse cx="100" cy="8" rx="10" ry="8" fill="url(#pk)"/>
<path d="M36 75c0-30 5-58 22-66l22 0c12 6 10 30 10 66z" fill="#f4f1f2"/>
<path d="M52 0c-3 6 6 10 10 6c4 6 16 6 20-1l2-5z" fill="#4a342c"/>
<path d="M62 0h16c0 6-4 9-8 9s-8-3-8-9z" fill="#f1c7b8"/>
<ellipse cx="74" cy="1" rx="4" ry="1.500" fill="#e88a8a"/>
<path d="M58 10l12 6l12-6l-4 14h-14z" fill="#e4dde0"/>
<ellipse cx="72" cy="36" rx="22" ry="16" fill="#4c7a3a"/>
<ellipse cx="60" cy="38" rx="6" ry="5" fill="#b24a72"/><ellipse cx="70" cy="30" rx="6" ry="5" fill="#d9a0b4"/><ellipse cx="80" cy="36" rx="5" ry="4" fill="#c8688a"/><ellipse cx="66" cy="42" rx="5" ry="4" fill="#e3b5c2"/>
<ellipse cx="93" cy="32" rx="6" ry="7" fill="#5a46b0"/><ellipse cx="88" cy="42" rx="6" ry="4" fill="#f0a020"/>
<ellipse cx="55" cy="30" rx="4" ry="3" fill="#5d8c44"/><ellipse cx="82" cy="27" rx="5" ry="3" fill="#5d8c44"/>
<ellipse cx="10" cy="42" rx="7" ry="4" fill="#e8962a"/><ellipse cx="20" cy="38" rx="5" ry="4" fill="#7a5a70"/>
</svg>
<div class="t" style="left:144px;top:24.500px;font-size:20.500px;line-height:26px;height:26px;color:#fff">修复照片</div>
<svg style="left:385px;top:26px" width="12" height="20" viewBox="0 0 12 20"><path d="M1.500 1.500L10 10L1.500 18.500" fill="none" stroke="#e6e6e6" stroke-width="1.500"/></svg>
</div>
</div>
<div class="a" style="left:1899px;top:310px;width:18px;height:276px;background:#4a4a4a;"></div>
<div class="a" style="left:1902px;top:331px;width:15px;height:131px;background:#636363;"></div>
<svg style="left:1906px;top:320px" width="9" height="6" viewBox="0 0 9 6"><path d="M0.500 5L4.500 1L8.500 5" fill="none" stroke="#8a8a8a" stroke-width="1.200"/></svg>
<svg style="left:1906px;top:570px" width="9" height="6" viewBox="0 0 9 6"><path d="M0.500 1L4.500 5L8.500 1" fill="none" stroke="#8a8a8a" stroke-width="1.200"/></svg>
<div class="a" style="left:1906px;top:344px;width:16px;height:73px;background:#2b2b2b;border:1.500px solid #8f8f8f;border-radius:4px"></div>
<div class="a" style="left:1908.5px;top:385px;width:9px;height:2px;background:#3fd05a;"></div>
<div class="a" style="left:1908.5px;top:388px;width:9px;height:2px;background:#3fd05a;"></div>
<div class="a" style="left:1908.5px;top:391px;width:9px;height:2px;background:#3fd05a;"></div>
<div class="a" style="left:1908.5px;top:394px;width:9px;height:2px;background:#3fd05a;"></div>
<div class="a" style="left:1908.5px;top:397px;width:9px;height:2px;background:#3fd05a;"></div>
<div class="a" style="left:1908.5px;top:400px;width:9px;height:2px;background:#3fd05a;"></div>
<div class="a" style="left:1908.5px;top:403px;width:9px;height:2px;background:#3fd05a;"></div>
<div class="a" style="left:1908.5px;top:406px;width:9px;height:2px;background:#3fd05a;"></div>
<div class="a" style="left:1908.5px;top:409px;width:9px;height:2px;background:#3fd05a;"></div>
<div class="a" style="left:1908.5px;top:412px;width:9px;height:2px;background:#3fd05a;"></div>
<div class="a" style="left:1456px;top:590px;width:461px;height:34px;background:#424242;"></div>
<div class="a" style="left:1456px;top:624px;width:461px;height:1px;background:#3b3b3b;"></div>
<div class="a" style="left:1456px;top:590px;width:55px;height:35px;background:#535353;"></div>
<div class="a" style="left:1511px;top:590px;width:1px;height:34px;background:#3a3a3a;"></div>
<div class="t" style="left:1468px;top:597.5px;font-size:15px;color:#f2f2f2">图层</div>
<div class="a" style="left:1567px;top:590px;width:1px;height:34px;background:#3a3a3a;"></div>
<div class="t" style="left:1523px;top:597.5px;font-size:15px;color:#b4b4b4">通道</div>
<div class="a" style="left:1623px;top:590px;width:1px;height:34px;background:#3a3a3a;"></div>
<div class="t" style="left:1579px;top:597.5px;font-size:15px;color:#b4b4b4">路径</div>
<div class="a" style="left:1898px;top:602px;width:12px;height:1px;background:#bdbdbd;"></div>
<div class="a" style="left:1898px;top:605px;width:12px;height:1px;background:#bdbdbd;"></div>
<div class="a" style="left:1898px;top:608px;width:12px;height:1px;background:#bdbdbd;"></div>
<div class="a" style="left:1898px;top:611px;width:12px;height:1px;background:#bdbdbd;"></div>
<div class="a" style="left:1456px;top:625px;width:461px;height:405px;background:#535353;"></div>
<div class="a" style="left:1461px;top:637px;width:106px;height:26px;border:1px solid #6a6a6a;border-radius:4px;background:#454545"></div>
<svg style="left:1470px;top:642px" width="13" height="13" viewBox="0 0 13 13"><circle cx="5" cy="5" r="3.800" fill="none" stroke="#e0e0e0" stroke-width="1.800"/><path d="M8 8l4 4" stroke="#e0e0e0" stroke-width="2.200" stroke-linecap="round"/></svg>
<div class="t" style="left:1489px;top:638px;font-size:14px;color:#ededed;">类型</div>
<svg style="left:1553.0px;top:649.0px" width="8" height="5.0" viewBox="0 0 8 5.0"><path d="M0.5 0.5L4.0 4.0L7.5 0.5" fill="none" stroke="#d0d0d0" stroke-width="1.3"/></svg>
<svg style="left:1588px;top:642px" width="16" height="12" viewBox="0 0 16 12"><rect x="0.700" y="0.700" width="14.600" height="10.600" fill="none" stroke="#dddddd" stroke-width="1.400"/><path d="M3 9.500l3-4.500l2 2.500l2-3.500l3 5.500z" fill="#dddddd"/></svg>
<svg style="left:1619px;top:641.5px" width="13" height="13" viewBox="0 0 13 13"><circle cx="6.500" cy="6.500" r="5.800" fill="none" stroke="#dddddd" stroke-width="1.400"/><path d="M10.600 2.400A5.800 5.800 0 0 1 2.400 10.600z" fill="#dddddd"/></svg>
<div class="t" style="left:1648px;top:637px;font-family:'Liberation Serif',serif;font-weight:bold;font-size:19px;line-height:22px;height:22px;color:#dddddd">T</div>
<svg style="left:1679px;top:641px" width="14" height="14" viewBox="0 0 14 14"><rect x="2" y="2" width="10" height="10" fill="none" stroke="#dddddd" stroke-width="1.600"/><g fill="#535353" stroke="#dddddd" stroke-width="1"><rect x="0.500" y="0.500" width="3" height="3"/><rect x="10.500" y="0.500" width="3" height="3"/><rect x="0.500" y="10.500" width="3" height="3"/><rect x="10.500" y="10.500" width="3" height="3"/></g></svg>
<svg style="left:1710px;top:641px" width="14" height="14" viewBox="0 0 14 14"><path d="M4.500 0.700H9.500L13 4v8.500H4.500z" fill="none" stroke="#dddddd" stroke-width="1.400"/><rect x="0.500" y="7" width="7" height="7" fill="#dddddd"/></svg>
<div class="a" style="left:1745px;top:638px;width:11px;height:21px;border-radius:6px;background:#454545;border:1px solid #5e5e5e"></div>
<div class="a" style="left:1745px;top:637px;width:11px;height:11px;border-radius:50%;background:#e4e4e4"></div>
<div class="a" style="left:1456px;top:665px;width:461px;height:1px;background:#454545;"></div>
<div class="a" style="left:1456px;top:701px;width:461px;height:1px;background:#454545;"></div>
<div class="a" style="left:1461px;top:673px;width:145px;height:26px;border:1px solid #5e5e5e;border-radius:4px;background:#505050"></div>
<div class="t" style="left:1470px;top:674px;font-size:15px;color:#8a8a8a;">正常</div>
<svg style="left:1593.0px;top:685.0px" width="8" height="5.0" viewBox="0 0 8 5.0"><path d="M0.5 0.5L4.0 4.0L7.5 0.5" fill="none" stroke="#6c6c6c" stroke-width="1.3"/></svg>
<div class="t" style="left:1617px;top:673px;font-size:15px;color:#8a8a8a;letter-spacing:0.3px">不透明度:</div>
<div class="a" style="left:1688px;top:673px;width:66px;height:22px;border:1px solid #5e5e5e;border-radius:3px;background:#505050"></div>
<div class="a" style="left:1735px;top:674px;width:1px;height:20px;background:#5e5e5e;"></div>
<div class="t" style="left:1691px;top:674px;font-size:14px;color:#7c7c7c;">100%</div>
<svg style="left:1741.5px;top:684.25px" width="7" height="4.5" viewBox="0 0 7 4.5"><path d="M0.5 0.5L3.5 3.5L6.5 0.5" fill="none" stroke="#6c6c6c" stroke-width="1.3"/></svg>
<div class="t" style="left:1464px;top:710px;font-size:15px;color:#8a8a8a;letter-spacing:0.5px">锁定:</div>
<svg style="left:1511px;top:713px" width="14" height="14" viewBox="0 0 14 14"><rect x="0.500" y="0.500" width="13" height="13" fill="none" stroke="#8a8a8a" stroke-width="1"/><g fill="#8a8a8a"><rect x="1" y="1" width="4" height="4"/><rect x="9" y="1" width="4" height="4"/><rect x="5" y="5" width="4" height="4"/><rect x="1" y="9" width="4" height="4"/><rect x="9" y="9" width="4" height="4"/></g></svg>
<svg style="left:1538px;top:711px" width="18" height="18" viewBox="0 0 18 18"><path d="M17 1c-4 2.500-8 6.500-10 10l1.800 1.600c3-3 6.500-7.500 8.200-11.600z" fill="#8a8a8a"/><path d="M6.300 12c-2.500 0.200-3.500 2-3.800 4.300c-0.400 0.500-1 0.700-1.500 0.700c3 0.800 6.500 0.300 7.200-3.300z" fill="#8a8a8a"/></svg>
<svg style="left:1564.5px;top:712.0px" width="16" height="16" viewBox="-10 -10 20 20"><path d="M0 -7V7M-7 0H7" stroke="#8a8a8a" stroke-width="1.3" fill="none"/><path d="M0 -10l3.6 4h-7.2zM0 10l3.6 -4h-7.2zM-10 0l4 -3.6v7.2zM10 0l-4 -3.6v7.2z" fill="#8a8a8a"/></svg>
<svg style="left:1592px;top:712px" width="17" height="17" viewBox="0 0 17 17"><path d="M4 0V13H17M0 4H10L13 7V17" fill="none" stroke="#8a8a8a" stroke-width="1.300"/><path d="M10 4v3h3" fill="none" stroke="#8a8a8a" stroke-width="1"/></svg>
<svg style="left:1621px;top:711px" width="13" height="16" viewBox="0 0 13 16"><path d="M3.500 7V4.500a3 3 0 0 1 6 0V7" fill="none" stroke="#8a8a8a" stroke-width="1.600"/><rect x="0.500" y="7" width="12" height="9" rx="1" fill="#8a8a8a"/><circle cx="6.500" cy="11.500" r="1.300" fill="#535353"/></svg>
<div class="t" style="left:1646px;top:710px;font-size:15px;color:#8a8a8a;letter-spacing:0.5px">填充:</div>
<div class="a" style="left:1688px;top:709px;width:66px;height:22px;border:1px solid #5e5e5e;border-radius:3px;background:#505050"></div>
<div class="a" style="left:1735px;top:710px;width:1px;height:20px;background:#5e5e5e;"></div>
<div class="t" style="left:1691px;top:710px;font-size:14px;color:#7c7c7c;">100%</div>
<svg style="left:1741.5px;top:720.25px" width="7" height="4.5" viewBox="0 0 7 4.5"><path d="M0.5 0.5L3.5 3.5L6.5 0.5" fill="none" stroke="#6c6c6c" stroke-width="1.3"/></svg>
<div class="a" style="left:1456px;top:737px;width:461px;height:260px;background:#4f4f4f;"></div>
<div class="a" style="left:1456px;top:741px;width:38px;height:102px;background:#535353;"></div>
<div class="a" style="left:1494px;top:741px;width:405px;height:49px;background:#6b6b6b;"></div>
<div class="a" style="left:1494px;top:791px;width:405px;height:52px;background:#6b6b6b;"></div>
<div class="a" style="left:1456px;top:790px;width:443px;height:1px;background:#474747;"></div>
<div class="a" style="left:1456px;top:843px;width:443px;height:1px;background:#4a4a4a;"></div>
<div class="a" style="left:1494px;top:741px;width:1px;height:102px;background:#5e5e5e;"></div>
<svg style="left:1466.5px;top:762px" width="16" height="10" viewBox="0 0 16 10"><path d="M0.500 5C3 1 6 0.500 8 0.500S13 1 15.500 5C13 9 10 9.500 8 9.500S3 9 0.500 5z" fill="#e6e6e6"/><circle cx="8" cy="5" r="3.200" fill="#535353"/><circle cx="8" cy="5" r="1.600" fill="#e6e6e6"/><circle cx="6.800" cy="3.800" r="0.900" fill="#535353"/></svg>
<svg style="left:1466.5px;top:813px" width="16" height="10" viewBox="0 0 16 10"><path d="M0.500 5C3 1 6 0.500 8 0.500S13 1 15.500 5C13 9 10 9.500 8 9.500S3 9 0.500 5z" fill="#e6e6e6"/><circle cx="8" cy="5" r="3.200" fill="#535353"/><circle cx="8" cy="5" r="1.600" fill="#e6e6e6"/><circle cx="6.800" cy="3.800" r="0.900" fill="#535353"/></svg>
<div class="t" style="left:1509px;top:752px;font-family:'Liberation Serif',serif;font-size:29px;line-height:30px;height:30px;color:#ededed;-webkit-text-stroke:0.700px #ededed">T</div>
<div class="t" style="left:1551px;top:758px;font-size:13px;color:#f0f0f0;font-family:'Liberation Serif',serif;font-size:15px">10</div>
<div class="a" style="left:1498px;top:798px;width:40px;height:40px;background:#1a1a1a"></div>
<div class="a" style="left:1499px;top:799px;width:38px;height:38px;background:radial-gradient(circle farthest-corner at 50% 50%,#ff0000 0%,#ff00ff 16.667%,#0000ff 33.333%,#00ffff 50%,#00ff00 66.667%,#ffff00 83.333%,#ff0000 100%)"></div>
<div class="t" style="left:1551px;top:808px;font-size:14px;color:#f0f0f0;">背景</div>
<svg style="left:1867px;top:810px" width="12" height="15" viewBox="0 0 12 15"><path d="M3 6.500V4.500a3 3 0 0 1 6 0V6.500" fill="none" stroke="#e0e0e0" stroke-width="1.300"/><rect x="0.700" y="6.500" width="10.600" height="7.800" fill="none" stroke="#e0e0e0" stroke-width="1.300"/><circle cx="6" cy="10.500" r="1.200" fill="#e0e0e0"/></svg>
<div class="a" style="left:1899px;top:741px;width:18px;height:256px;background:#4a4a4a;"></div>
<div class="a" style="left:1456px;top:997px;width:461px;height:1px;background:#454545;"></div>
<svg style="left:1664px;top:1008px" width="19" height="10" viewBox="0 0 19 10"><rect x="0.800" y="0.800" width="9" height="8.400" rx="4.200" fill="none" stroke="#d6d6d6" stroke-width="1.500"/><rect x="9.200" y="0.800" width="9" height="8.400" rx="4.200" fill="none" stroke="#d6d6d6" stroke-width="1.500"/><rect x="5.500" y="4.200" width="8" height="1.600" fill="#d6d6d6"/></svg>
<div class="a" style="left:0px;top:1030px;width:1917px;height:20px;background:#0e0d0c;"></div>
<svg style="left:20px;top:1044px" width="21" height="8" viewBox="0 0 21 8"><path d="M0 4L9 2.500V8H0zM10.500 2.200L21 0.500V8H10.500z" fill="#ffffff"/></svg>
<div class="a" style="left:60px;top:1033px;width:205px;height:17px;background:#eeeeee;"></div>
<div class="a" style="left:265px;top:1033px;width:70px;height:17px;background:#2189f0;"></div>
<svg style="left:68px;top:1040px" width="30" height="12" viewBox="0 0 30 12"><ellipse cx="14" cy="12" rx="9" ry="8" fill="none" stroke="#3aa0ea" stroke-width="3.500"/><path d="M2 12c6-10 20-12 26-8" fill="none" stroke="#7cc3f4" stroke-width="1.500"/></svg>
<div class="a" style="left:100px;top:1041px;width:165px;height:9px;overflow:hidden"><div class="t" style="left:10px;top:4px;font-size:15px;color:#222;letter-spacing:1px">计写梦数 利十一数十</div></div>
<div class="a" style="left:265px;top:1041px;width:70px;height:9px;overflow:hidden"><div class="t" style="left:7px;top:5px;font-size:15px;color:#fff">搜索一下</div></div>
<div class="a" style="left:357px;top:1043px;width:28px;height:7px;background:#4ea4e8;"></div>
<div class="a" style="left:359px;top:1044px;width:24px;height:6px;background:#d8ecfa;"></div>
<svg style="left:420px;top:1040px" width="28" height="12" viewBox="0 0 28 12"><circle cx="13" cy="14" r="10" fill="none" stroke="#1a7fe0" stroke-width="4"/></svg>
<svg style="left:481px;top:1039px" width="30" height="12" viewBox="0 0 30 12"><circle cx="14" cy="15" r="12" fill="#e8f6e0" stroke="#56c23a" stroke-width="3"/><path d="M20 2l6-1" stroke="#56c23a" stroke-width="2"/></svg>
<div class="a" style="left:527px;top:1030px;width:60px;height:20px;background:#2c2c2c;"></div>
<div class="a" style="left:543px;top:1040px;width:28px;height:14px;border:2px solid #28b4e8;background:#0a1a2a"></div>
<div class="a" style="left:548px;top:1044px;width:20px;height:6px;overflow:hidden"><div class="t" style="left:0;top:0;font-size:14px;font-weight:bold;color:#28b4e8">Ps</div></div>
<div class="a" style="left:1390px;top:1036px;width:50px;height:14px;overflow:hidden"><div class="t" style="left:5px;top:0px;font-size:15px;color:#fff;line-height:18px">56℃</div></div>
<svg style="left:1492px;top:1043px" width="14" height="8" viewBox="0 0 14 8"><path d="M1 3l11-2.500V8H1z" fill="none" stroke="#e0e0e0" stroke-width="1.500"/></svg>
<svg style="left:1523px;top:1042px" width="20" height="10" viewBox="0 0 20 10"><circle cx="10" cy="10" r="9" fill="#2fb34a"/><path d="M2 8a9 9 0 0 1 16 0z" fill="#f4d03a"/></svg>
<div class="a" style="left:1553px;top:1045px;width:2px;height:5px;background:#ddd;"></div>
<div class="a" style="left:1557px;top:1046px;width:2px;height:4px;background:#ddd;"></div>
<svg style="left:1592px;top:1044px" width="26" height="6" viewBox="0 0 26 6"><path d="M1 6c3-4 7-5 11-4" fill="none" stroke="#ddd" stroke-width="1.300"/><path d="M16 2l3 4" stroke="#ddd" stroke-width="1.300"/><path d="M22 2c2 1 3 3 3 5" fill="none" stroke="#888" stroke-width="1.300"/></svg>
<div class="a" style="left:1640px;top:1043px;width:24px;height:7px;overflow:hidden"><div class="t" style="left:2px;top:1px;font-size:17px;color:#fff">英</div></div>
<svg style="left:1680px;top:1044px" width="20" height="8" viewBox="0 0 20 8"><path d="M0 6l18-5v8H0z" fill="#e9542a"/></svg>
<div class="a" style="left:1715px;top:1034px;width:90px;height:16px;overflow:hidden"><div class="t" style="left:6px;top:2px;font-size:15px;color:#fff;line-height:18px">22:21 周四</div></div>
<svg style="left:1818px;top:1044px" width="22" height="8" viewBox="0 0 22 8"><path d="M5 1h16v8M1 4h14v6H1z" fill="none" stroke="#ddd" stroke-width="1.500"/></svg>
<div class="a" style="left:1868px;top:1045px;width:22px;height:5px;background:#ffffff;"></div>
<div class="a" style="left:1914px;top:1030px;width:1px;height:20px;background:#777;"></div>
<div class="a" style="left:1692px;top:957px;width:232px;height:74px;border-radius:20px 24px 24px 24px;background:#2252ad;overflow:hidden"><div class="a" style="left:2px;top:2px;width:228px;height:70px;border-radius:18px 22px 22px 22px;overflow:hidden;background:linear-gradient(to bottom,#123a7e 0%,#12397a 60%,#153890 80%,#173c9c 100%)">
<svg style="left:0;top:0" width="228" height="70" viewBox="0 0 228 70">
<defs><radialGradient id="sg" cx="0.5" cy="0.5" r="0.5"><stop offset="0" stop-color="#ffff88" stop-opacity="0.600"/><stop offset="1" stop-color="#ffff88" stop-opacity="0"/></radialGradient>
<filter id="b1" x="-20%" y="-20%" width="140%" height="140%"><feGaussianBlur stdDeviation="0.800"/></filter></defs>
<rect x="0" y="54" width="228" height="16" fill="#1a42aa" opacity="0.450"/>
<g filter="url(#b1)">
<path d="M135 31L154 15" stroke="#2a86c0" stroke-width="1.400"/><path d="M186 33L208 13" stroke="#2a86c0" stroke-width="1.300"/>
<path d="M144 51L152 44" stroke="#1f7a9a" stroke-width="2" opacity="0.800"/>
<ellipse cx="173" cy="25" rx="14" ry="21" transform="rotate(22 173 25)" fill="#0b1a4c"/>
<path d="M160 22c-4 10-6 20-2 30l14-8z" fill="#0b1a4c"/>
<path d="M163 8c8-6 20-3 24 8" fill="none" stroke="#1a8a9e" stroke-width="1.800" opacity="0.800"/>
<path d="M178 35C170 40 162 50 157 61H191C189 50 185 40 178 35z" fill="#8a58d0"/>
<path d="M170 46l-4 14M176 44l-2 16M181 45l1 15" stroke="#a884e6" stroke-width="1" opacity="0.700"/>
<path d="M177 34c4-1 7 2 8 6c1 5 3 9 6 12" fill="none" stroke="#ddd4f4" stroke-width="1.800"/>
<path d="M188 47c0-3 13-3 13 0l1 5c0 4-1 8-2 11h-11c-1-3-2-7-2-11z" fill="#dcdde8"/><path d="M188 48l1-4l3 2zM201 48l-1-4l-3 2z" fill="#dcdde8"/>
<path d="M189 56h12" stroke="#b48ad8" stroke-width="1"/>
</g>
<circle cx="132" cy="36" r="9" fill="url(#sg)"/>
<path d="M132 29.500l1.900 4l4.400 0.500l-3.200 3l0.800 4.300l-3.900-2.100l-3.900 2.100l0.800-4.300l-3.200-3l4.400-0.500z" fill="#ffff66"/>
<path d="M94 29l6-3c2 1.500 4 1.500 6 0l6 3l-2.500 4.500l-2.500-1v10h-8v-10l-2.500 1z" fill="#ffff66"/>
<path d="M81.800 25.300A9.100 9.100 0 1 1 68 37.100A11 11 0 0 0 81.800 25.300z" fill="#ffff66"/>
<circle cx="49" cy="30.500" r="1.500" fill="#ffff66"/><path d="M54.500 33l-2.200 5" stroke="#ffff66" stroke-width="1.600"/>
<circle cx="116" cy="54" r="1.100" fill="#e8e4b0"/><circle cx="50" cy="62" r="0.800" fill="#c8b850"/><circle cx="207" cy="56" r="0.900" fill="#c8b850"/><circle cx="150" cy="66" r="0.700" fill="#c8b850"/><circle cx="222" cy="34" r="2.500" fill="#ffff66" opacity="0.500"/>
</svg>
<div class="t" style="left:13px;top:23px;font-size:20px;line-height:24px;height:24px;color:#ffff66">英</div>
</div></div>
<div class="a" style="left:1908px;top:936px;width:12px;height:73px;background:#2a313a;border:2px solid #55616e;border-radius:2px"></div>
<div class="a" style="left:1912px;top:985.0px;width:4px;height:1px;background:#2a9fe0;"></div>
<div class="a" style="left:1912px;top:987.5px;width:4px;height:1px;background:#2a9fe0;"></div>
<div class="a" style="left:1912px;top:990.0px;width:4px;height:1px;background:#2a9fe0;"></div>
<div class="a" style="left:1912px;top:992.5px;width:4px;height:1px;background:#2a9fe0;"></div>
<div class="a" style="left:1912px;top:995.0px;width:4px;height:1px;background:#2a9fe0;"></div>
<div class="a" style="left:1912px;top:997.5px;width:4px;height:1px;background:#2a9fe0;"></div>
<div class="a" style="left:1912px;top:1000.0px;width:4px;height:1px;background:#2a9fe0;"></div>
<div class="a" style="left:1912px;top:1002.5px;width:4px;height:1px;background:#2a9fe0;"></div>
</body></html>
